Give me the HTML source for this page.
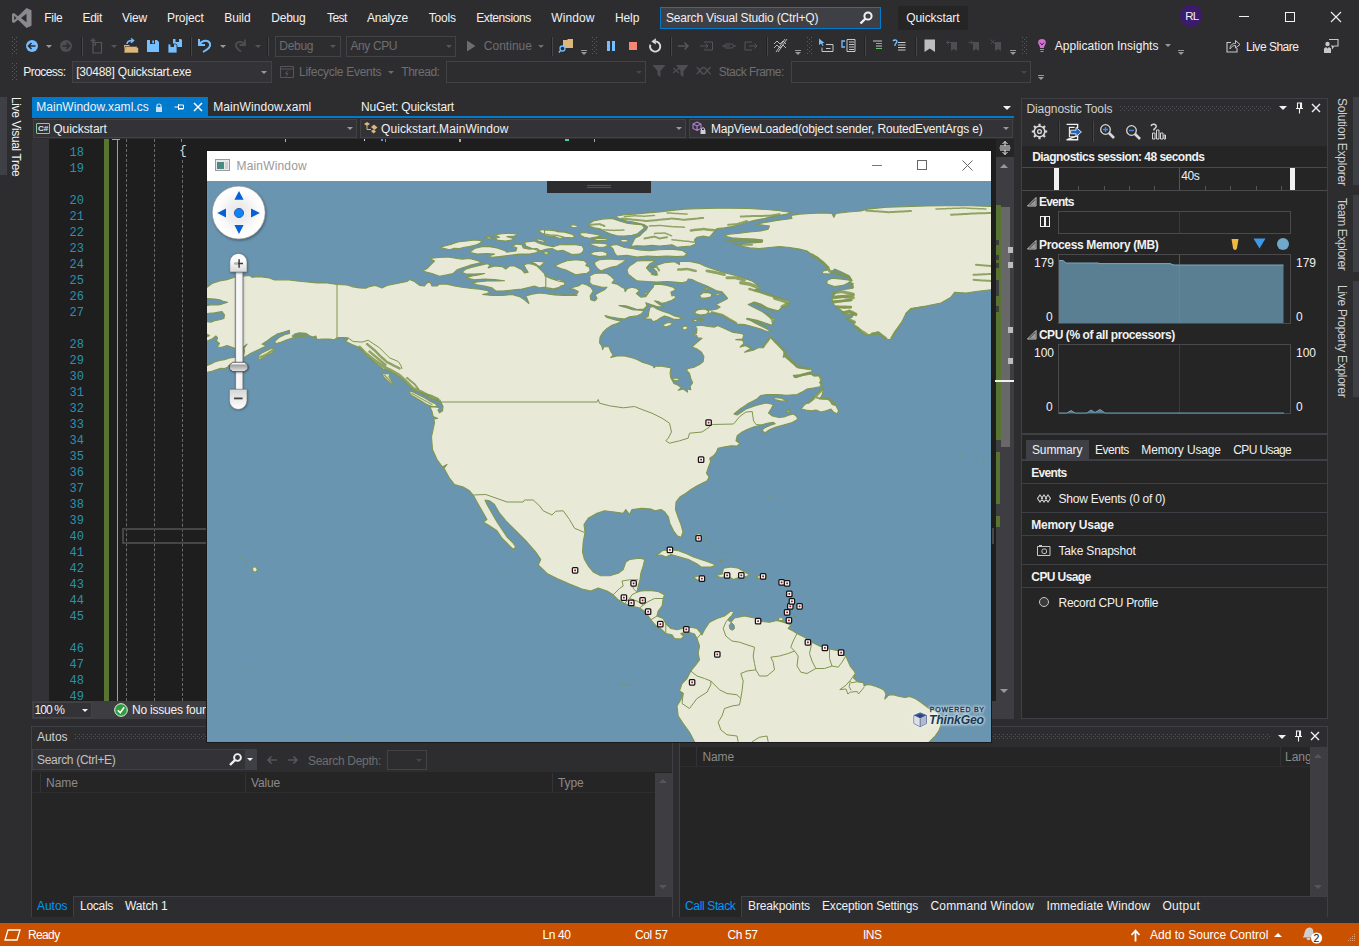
<!DOCTYPE html>
<html><head><meta charset="utf-8">
<style>
*{box-sizing:border-box;margin:0;padding:0}
html,body{width:1359px;height:946px;overflow:hidden;background:#2d2d30}
body{font-family:"Liberation Sans",sans-serif;font-size:12px;color:#f1f1f1;position:relative}
.a{position:absolute}
.t{position:absolute;white-space:nowrap;line-height:16px;height:16px}
.dim{color:#6d6d70}
.grip{position:absolute;width:5px;background-image:radial-gradient(circle at 0.5px 0.5px,#5a5a5f 0.55px,transparent 0.6px),radial-gradient(circle at 0.5px 0.5px,#5a5a5f 0.55px,transparent 0.6px);background-size:4px 4px,4px 4px;background-position:0 0,2px 2px}
.sep{position:absolute;width:1px;background:#222224;border-right:1px solid #464648;width:2px}
.combo{position:absolute;border:1px solid #434346;background:#333337}
.arr{position:absolute;width:0;height:0;border-left:3px solid transparent;border-right:3px solid transparent;border-top:3px solid #999}
.dots{position:absolute;height:5px;background-image:radial-gradient(circle at 0.5px 0.5px,#55555a 0.55px,transparent 0.6px),radial-gradient(circle at 0.5px 0.5px,#55555a 0.55px,transparent 0.6px);background-size:4px 4px,4px 4px;background-position:0 0,2px 2px}
</style></head><body>

<!-- ===== MENU BAR ===== -->
<div id="menubar">
<svg class="a" style="left:11px;top:7px" width="22" height="22" viewBox="0 0 22 22"><path d="M15.5 1 L20.5 3.2 V18.8 L15.5 21 L7 12.8 L3 16 L1 15 V7 L3 6 L7 9.2 Z M3.2 8.8 V13.2 L5.5 11 Z M10 11 L15.5 15.3 V6.7 Z" fill="#8a8a8e" fill-rule="evenodd"/></svg>
<div class="t" style="left:44.25px;top:10px;letter-spacing:-0.273px">File</div>
<div class="t" style="left:82.5px;top:10px;letter-spacing:-0.297px">Edit</div>
<div class="t" style="left:122px;top:10px;letter-spacing:-0.199px">View</div>
<div class="t" style="left:167px;top:10px;letter-spacing:-0.087px">Project</div>
<div class="t" style="left:224.25px;top:10px;letter-spacing:-0.087px">Build</div>
<div class="t" style="left:271.25px;top:10px;letter-spacing:-0.225px">Debug</div>
<div class="t" style="left:327px;top:10px;letter-spacing:-0.566px">Test</div>
<div class="t" style="left:367px;top:10px;letter-spacing:-0.243px">Analyze</div>
<div class="t" style="left:428.75px;top:10px;letter-spacing:-0.203px">Tools</div>
<div class="t" style="left:476.25px;top:10px;letter-spacing:-0.420px">Extensions</div>
<div class="t" style="left:551.25px;top:10px;letter-spacing:0.094px">Window</div>
<div class="t" style="left:615px;top:10px;letter-spacing:-0.109px">Help</div>
<div class="a" style="left:660px;top:7px;width:221px;height:22px;border:1px solid #007acc;background:#3f3f46"></div>
<div class="t" style="left:666px;top:10px;letter-spacing:-0.182px">Search Visual Studio (Ctrl+Q)</div>
<svg class="a" style="left:858px;top:10px" width="16" height="16" viewBox="0 0 16 16"><circle cx="10" cy="6" r="3.6" fill="none" stroke="#f1f1f1" stroke-width="2"/><path d="M7.5 8.5 L2.5 13.5" stroke="#f1f1f1" stroke-width="2.4"/></svg>
<div class="a" style="left:898px;top:6px;width:70px;height:24px;background:#252526"></div>
<div class="t" style="left:906.25px;top:10px;letter-spacing:-0.077px">Quickstart</div>
<div class="a" style="left:1180px;top:5px;width:22px;height:22px;border-radius:11px;background:#3c1a6e"></div>
<div class="t" style="left:1185.25px;top:8px;font-size:11.5px;letter-spacing:-0.727px">RL</div>
<div class="a" style="left:1239px;top:16px;width:10px;height:1px;background:#f1f1f1"></div>
<div class="a" style="left:1285px;top:12px;width:10px;height:10px;border:1px solid #f1f1f1"></div>
<svg class="a" style="left:1330px;top:11px" width="12" height="12" viewBox="0 0 12 12"><path d="M1 1 L11 11 M11 1 L1 11" stroke="#f1f1f1" stroke-width="1.1"/></svg>
</div>

<!-- ===== TOOLBAR ROW 1 ===== -->
<div id="tb1">
<div class="grip" style="left:12px;top:37px;height:18px"></div>
<svg class="a" style="left:24px;top:38px" width="16" height="16" viewBox="0 0 16 16"><circle cx="8" cy="8" r="6" fill="#75beff"/><path d="M11.5 8 H5 M7.5 5 L4.5 8 L7.5 11" stroke="#2d2d30" stroke-width="1.6" fill="none"/></svg>
<div class="arr" style="left:46px;top:45px"></div>
<svg class="a" style="left:58px;top:38px" width="16" height="16" viewBox="0 0 16 16"><circle cx="8" cy="8" r="6" fill="#4e4e52"/><path d="M4.5 8 H11 M8.5 5 L11.5 8 L8.5 11" stroke="#2d2d30" stroke-width="1.6" fill="none"/></svg>
<div class="sep" style="left:81px;top:37px;height:19px"></div>
<svg class="a" style="left:89px;top:37px" width="16" height="18" viewBox="0 0 16 18"><path d="M4 5.5 H12.5 V16 H4 Z M6.5 5.5 V8 H4" stroke="#55555a" fill="none" stroke-width="1.2"/><path d="M4 1 V6 M1.5 3.5 H6.5 M2.2 1.7 L5.8 5.3 M5.8 1.7 L2.2 5.3" stroke="#55555a" stroke-width="0.9"/></svg>
<div class="arr" style="left:111px;top:45px;border-top-color:#55555a"></div>
<svg class="a" style="left:123px;top:38px" width="17" height="16" viewBox="0 0 17 16"><path d="M1 7 H6 L7.5 8.5 H14 V15 H1 Z" fill="#dcb67a"/><path d="M2 8.5 H13 L15.5 10 V15 H1 Z" fill="#dcb67a" stroke="#2d2d30" stroke-width="0.6"/><path d="M4 6 C4 3 6 2.5 9.5 2.5 M8 0.5 L10.5 2.5 L8 4.8" stroke="#75beff" stroke-width="1.5" fill="none"/></svg>
<svg class="a" style="left:146px;top:39px" width="14" height="14" viewBox="0 0 14 14"><path d="M1 1 H11 L13 3 V13 H1 Z" fill="#75beff"/><rect x="4" y="1" width="5" height="4" fill="#2d2d30"/><rect x="6.3" y="1.5" width="1.7" height="2.8" fill="#75beff"/></svg>
<svg class="a" style="left:167px;top:38px" width="16" height="16" viewBox="0 0 16 16"><path d="M6 1 H14 L15 2 V9 H6 Z" fill="#75beff"/><rect x="8.5" y="1" width="3.5" height="3" fill="#2d2d30"/><path d="M1 6 H9 L10 7 V15 H1 Z" fill="#75beff" stroke="#2d2d30" stroke-width="0.8"/><rect x="3.5" y="6" width="3.5" height="3" fill="#2d2d30"/></svg>
<div class="sep" style="left:190px;top:37px;height:19px"></div>
<svg class="a" style="left:197px;top:37px" width="16" height="17" viewBox="0 0 16 17"><path d="M2 2 V8 H8 M2.5 7.5 C5 3 11 2.5 13 6.5 C14 10 11 12 6 15" stroke="#75beff" stroke-width="2" fill="none"/></svg>
<div class="arr" style="left:220px;top:45px"></div>
<svg class="a" style="left:233px;top:38px" width="14" height="15" viewBox="0 0 14 15"><path d="M12 1.5 V7 H6.5 M11.5 6.5 C9.5 3 4.5 3 3 6 C2 9 4 11 8 13.5" stroke="#4e4e52" stroke-width="1.8" fill="none"/></svg>
<div class="arr" style="left:255px;top:45px;border-top-color:#55555a"></div>
<div class="sep" style="left:267px;top:37px;height:19px"></div>
<div class="combo" style="left:275px;top:36px;width:66px;height:21px;background:#2d2d30"></div>
<div class="t dim" style="left:279.25px;top:38px;letter-spacing:-0.275px">Debug</div>
<div class="arr" style="left:330px;top:45px;border-top-color:#55555a"></div>
<div class="combo" style="left:346px;top:36px;width:110px;height:21px;background:#2d2d30"></div>
<div class="t dim" style="left:350.5px;top:38px;letter-spacing:-0.408px">Any CPU</div>
<div class="arr" style="left:446px;top:45px;border-top-color:#55555a"></div>
<svg class="a" style="left:466px;top:40px" width="10" height="12" viewBox="0 0 10 12"><path d="M1 0.5 L9.5 6 L1 11.5 Z" fill="#6d6d70"/></svg>
<div class="t dim" style="left:483.75px;top:38px;letter-spacing:0.025px">Continue</div>
<div class="arr" style="left:538px;top:45px;border-top-color:#6d6d70"></div>
<div class="sep" style="left:551px;top:37px;height:19px"></div>
<svg class="a" style="left:558px;top:38px" width="17" height="16" viewBox="0 0 17 16"><path d="M5 2 H9 L10 1 H15 V10 H5 Z" fill="#dcb67a"/><circle cx="4.5" cy="10.5" r="2.5" fill="#2d2d30" stroke="#75beff" stroke-width="1.3"/><path d="M2.8 12.3 L0.8 14.5" stroke="#75beff" stroke-width="1.5"/></svg>
<div class="a" style="left:581px;top:50px;width:6px;height:1px;background:#999"></div><div class="arr" style="left:581px;top:52px"></div>
<div class="grip" style="left:592px;top:37px;height:18px"></div>
<div class="a" style="left:607px;top:41px;width:3px;height:10px;background:#75beff"></div><div class="a" style="left:612px;top:41px;width:3px;height:10px;background:#75beff"></div>
<div class="a" style="left:629px;top:42px;width:8px;height:8px;background:#f48771"></div>
<svg class="a" style="left:647px;top:38px" width="16" height="16" viewBox="0 0 16 16"><path d="M8.3 3.4 A5.1 5.1 0 1 1 3.4 6.6" stroke="#d8d8d8" stroke-width="1.9" fill="none"/><path d="M8.8 0.3 V6.6 L4.3 3.4 Z" fill="#d8d8d8"/></svg>
<div class="sep" style="left:670px;top:37px;height:19px"></div>
<svg class="a" style="left:677px;top:40px" width="14" height="12" viewBox="0 0 14 12"><path d="M1 6 H11 M7.5 2.5 L11 6 L7.5 9.5" stroke="#55555a" stroke-width="1.5" fill="none"/></svg>
<svg class="a" style="left:700px;top:40px" width="14" height="12" viewBox="0 0 14 12"><path d="M0 6 H8 M5.5 3.5 L8 6 L5.5 8.5 M4 2 H12.5 V10 H4" stroke="#55555a" stroke-width="1" fill="none"/></svg>
<svg class="a" style="left:722px;top:40px" width="14" height="12" viewBox="0 0 14 12"><path d="M4 4 H10 C12 4 12 8 10 8 H4 C2 8 2 4 4 4 M0 6 H8 M11 6 H14" stroke="#55555a" stroke-width="1" fill="none"/></svg>
<svg class="a" style="left:744px;top:40px" width="14" height="12" viewBox="0 0 14 12"><path d="M5 6 H13 M10.5 3.5 L13 6 L10.5 8.5 M8 2 H1 V10 H8" stroke="#55555a" stroke-width="1" fill="none"/></svg>
<div class="sep" style="left:766px;top:37px;height:19px"></div>
<svg class="a" style="left:773px;top:38px" width="16" height="16" viewBox="0 0 16 16"><path d="M1 6 L4 3 L7 6 L10 3 L13 6 M1 10 L4 7 L7 10 L10 7 L13 10 M3 14 L12 1 M5 14 L14 1" stroke="#c8c8c8" stroke-width="0.9" fill="none"/></svg>
<div class="a" style="left:795px;top:50px;width:6px;height:1px;background:#999"></div><div class="arr" style="left:795px;top:52px"></div>
<div class="grip" style="left:807px;top:37px;height:18px"></div>
<svg class="a" style="left:818px;top:38px" width="17" height="15" viewBox="0 0 17 15"><path d="M1 0.5 L1 7 L3 5.5 L4.5 8 L5.5 7.5 L4.3 5 L6.5 5 Z" fill="#75beff"/><path d="M4 9.5 V13.5 H15 V6.5 H8" stroke="#c8c8c8" fill="none" stroke-width="1"/><path d="M8 10.5 H12.5" stroke="#c8c8c8"/></svg>
<svg class="a" style="left:841px;top:38px" width="16" height="15" viewBox="0 0 16 15"><path d="M4 3 H1 V9 H4" stroke="#75beff" stroke-width="1.3" fill="none"/><path d="M6 1.5 H14 V13.5 H6 Z" stroke="#c8c8c8" fill="none"/><path d="M8 4 H13 M8 6.5 H13 M8 9 H13 M8 11.5 H13" stroke="#c8c8c8"/></svg>
<div class="sep" style="left:864px;top:37px;height:19px"></div>
<svg class="a" style="left:872px;top:40px" width="12" height="11" viewBox="0 0 12 11"><path d="M1 1 H10 M4 3.5 H10 M4 6 H10" stroke="#c8c8c8"/><path d="M4 8.5 H10" stroke="#6abf69"/><path d="M4 3.5 H10" stroke="#6abf69"/></svg>
<svg class="a" style="left:892px;top:39px" width="15" height="13" viewBox="0 0 15 13"><path d="M1 2 C2 0.5 5 0.5 5 2.5 C5 4 2.5 4.5 3 7" stroke="#75beff" stroke-width="1.4" fill="none"/><path d="M6 3.5 H13.5 M6 6 H13.5 M6 8.5 H13.5 M6 11 H13.5" stroke="#c8c8c8"/></svg>
<div class="sep" style="left:915px;top:37px;height:19px"></div>
<svg class="a" style="left:924px;top:39px" width="12" height="14" viewBox="0 0 12 14"><path d="M0.5 0.5 H11 V13 L5.8 9.5 L0.5 13 Z" fill="#bdbdbd"/></svg>
<svg class="a" style="left:946px;top:39px" width="12" height="13" viewBox="0 0 12 13"><path d="M5 3 H11 V12 L8 10 L5 12 Z" fill="#4e4e52"/><path d="M0.5 3.5 H5 M2.5 1.5 L0.5 3.5 L2.5 5.5" stroke="#4e4e52" fill="none"/></svg>
<svg class="a" style="left:968px;top:39px" width="12" height="13" viewBox="0 0 12 13"><path d="M5 3 H11 V12 L8 10 L5 12 Z" fill="#4e4e52"/><path d="M0.5 3.5 H5 M3 1.5 L5 3.5 L3 5.5" stroke="#4e4e52" fill="none"/></svg>
<svg class="a" style="left:990px;top:39px" width="12" height="13" viewBox="0 0 12 13"><path d="M5 3 H11 V12 L8 10 L5 12 Z" fill="#4e4e52"/><path d="M0.5 0.5 L5 5 M5 0.5 L0.5 5" stroke="#4e4e52" fill="none"/></svg>
<div class="a" style="left:1010px;top:50px;width:6px;height:1px;background:#999"></div><div class="arr" style="left:1010px;top:52px"></div>
<div class="grip" style="left:1022px;top:37px;height:18px"></div>
<svg class="a" style="left:1036px;top:38px" width="12" height="16" viewBox="0 0 12 16"><path d="M6 1 C2.5 1 1.5 4 2.5 6 C3.5 8 4 8.5 4 10 H8 C8 8.5 8.5 8 9.5 6 C10.5 4 9.5 1 6 1 Z" fill="#d670d6"/><path d="M4 4.5 L6 7 L8 4.5" stroke="#2d2d30" fill="none"/><path d="M4 11.5 H8 M4.5 13.5 H7.5" stroke="#d670d6" stroke-width="1.2"/></svg>
<div class="t" style="left:1054.75px;top:38px;letter-spacing:0.017px">Application Insights</div>
<div class="arr" style="left:1165px;top:44px"></div>
<div class="a" style="left:1178px;top:50px;width:6px;height:1px;background:#999"></div><div class="arr" style="left:1178px;top:52px"></div>
<svg class="a" style="left:1226px;top:39px" width="15" height="14" viewBox="0 0 15 14"><path d="M5 3.5 H1 V13 H11 V9" stroke="#c8c8c8" fill="none" stroke-width="1.1"/><path d="M4 10 C4 6 6 4.5 9.5 4.5 V1.5 L14 5.5 L9.5 9 V6.5 C7 6.5 5.5 7.5 4 10 Z" stroke="#c8c8c8" fill="none" stroke-width="1"/></svg>
<div class="t" style="left:1246px;top:39px;letter-spacing:-0.487px">Live Share</div>
<svg class="a" style="left:1323px;top:38px" width="16" height="16" viewBox="0 0 16 16"><path d="M6 1.5 H15 V8 H11 L9.5 10 V8 H8" stroke="#c8c8c8" fill="none" stroke-width="1.1"/><circle cx="4.5" cy="6" r="2.2" fill="#c8c8c8"/><path d="M1 15 V10.5 L3 9 L4.5 10.5 L6 9 L8 10.5 V15 Z" fill="#c8c8c8"/></svg>
</div>

<!-- ===== TOOLBAR ROW 2 ===== -->
<div id="tb2">
<div class="grip" style="left:12px;top:63px;height:18px"></div>
<div class="t" style="left:23.25px;top:64px;letter-spacing:-0.555px">Process:</div>
<div class="combo" style="left:72px;top:61px;width:200px;height:22px"></div>
<div class="t" style="left:76.25px;top:64px;letter-spacing:-0.231px">[30488] Quickstart.exe</div>
<div class="arr" style="left:261px;top:71px"></div>
<svg class="a" style="left:280px;top:66px" width="14" height="12" viewBox="0 0 14 12"><path d="M0.5 0.5 H13.5 V11.5 H0.5 Z M0.5 3 H13.5" stroke="#55555a" fill="none"/><path d="M8 4.5 L5.5 7.5 H8 L6 10.5" stroke="#55555a" fill="none"/></svg>
<div class="t dim" style="left:299px;top:64px;letter-spacing:-0.279px">Lifecycle Events</div>
<div class="arr" style="left:388px;top:71px;border-top-color:#6d6d70"></div>
<div class="t dim" style="left:401.25px;top:64px;letter-spacing:-0.444px">Thread:</div>
<div class="combo" style="left:446px;top:61px;width:200px;height:22px;background:#2d2d30"></div>
<div class="arr" style="left:636px;top:71px;border-top-color:#47474a"></div>
<svg class="a" style="left:652px;top:64px" width="14" height="14" viewBox="0 0 14 14"><path d="M0.5 1 H13.5 L8.5 7 V13 L5.5 11 V7 Z" fill="#4e4e52"/></svg>
<svg class="a" style="left:673px;top:64px" width="16" height="14" viewBox="0 0 16 14"><path d="M3 1 H15.5 L10.5 7 V13 L7.5 11 V7 Z" fill="#4e4e52"/><path d="M0 4 L6 9 M6 4 L0 9" stroke="#4e4e52" stroke-width="1.3"/></svg>
<svg class="a" style="left:696px;top:66px" width="16" height="10" viewBox="0 0 16 10"><path d="M0.5 8 C3 8 4 1.5 7.5 1.5 C11 1.5 12 8 15 8 M0.5 1.5 C3 1.5 5 8 7.5 8 C10 8 12 1.5 15 1.5" stroke="#4e4e52" stroke-width="1.6" fill="none"/></svg>
<div class="t dim" style="left:718.75px;top:64px;letter-spacing:-0.530px">Stack Frame:</div>
<div class="combo" style="left:791px;top:61px;width:240px;height:22px;background:#2d2d30"></div>
<div class="arr" style="left:1021px;top:71px;border-top-color:#47474a"></div>
<div class="a" style="left:1038px;top:75px;width:6px;height:1px;background:#999"></div><div class="arr" style="left:1038px;top:77px"></div>
</div>

<!-- ===== LEFT VERTICAL TAB ===== -->
<div class="a" style="left:0;top:97px;width:7px;height:78px;background:#3f3f46"></div>
<div class="t" style="left:24px;top:97px;transform-origin:0 0;transform:rotate(90deg);letter-spacing:-0.361px">Live Visual Tree</div>
<!-- ===== DOC TABS ===== -->
<div id="tabs">
<div class="a" style="left:32px;top:97px;width:176px;height:20px;background:#007acc"></div>
<div class="t" style="left:36.25px;top:99px;letter-spacing:0.026px">MainWindow.xaml.cs</div>
<svg class="a" style="left:155px;top:103px" width="8" height="10" viewBox="0 0 8 10"><path d="M2 4 V2.5 C2 0.5 6 0.5 6 2.5 V4" stroke="#c8dff0" fill="none" stroke-width="1.2"/><rect x="1" y="4" width="6" height="5" fill="#c8dff0"/></svg>
<svg class="a" style="left:174px;top:102px" width="11" height="10" viewBox="0 0 11 10"><path d="M0.5 5 H4.5 M4.5 2 V8 M4.5 3 H9.5 V6.5 H4.5 M4.5 7 H9.5" stroke="#fff" fill="none" stroke-width="1"/></svg>
<svg class="a" style="left:193px;top:102px" width="10" height="10" viewBox="0 0 10 10"><path d="M1 1 L9 9 M9 1 L1 9" stroke="#fff" stroke-width="1.5"/></svg>
<div class="t" style="left:213.25px;top:99px;letter-spacing:0.086px">MainWindow.xaml</div>
<div class="t" style="left:361px;top:99px;letter-spacing:-0.140px">NuGet: Quickstart</div>
<div class="a" style="left:32px;top:116px;width:982px;height:2px;background:#007acc"></div>
<div class="arr" style="left:1003px;top:106px;border-left-width:4px;border-right-width:4px;border-top-width:4px;border-top-color:#f1f1f1"></div>
</div>
<!-- ===== NAV BAR ===== -->
<div id="nav">
<div class="a" style="left:32px;top:118px;width:982px;height:21px;background:#2d2d30"></div>
<div class="combo" style="left:33px;top:119px;width:324px;height:19px"></div>
<div class="combo" style="left:360px;top:119px;width:326px;height:19px"></div>
<div class="combo" style="left:689px;top:119px;width:324px;height:19px"></div>
<div class="a" style="left:36px;top:123px;width:14px;height:11px;border:1px solid #8fc98f;border-radius:1px"></div>
<div class="t" style="left:38px;top:121px;font-size:8px;font-weight:bold;color:#e0e0e0">C#</div>
<div class="t" style="left:53.25px;top:121px;letter-spacing:-0.052px">Quickstart</div>
<div class="arr" style="left:347px;top:127px"></div>
<svg class="a" style="left:363px;top:121px" width="16" height="15" viewBox="0 0 16 15"><path d="M1 3 L4 1 L7 3 L4 5 Z" fill="#dcb67a"/><path d="M4 5 V8.5 H8" stroke="#dcb67a" fill="none"/><path d="M8 6 L11 3.5 L14.5 6.5 L11.5 9 Z" fill="#dcb67a"/><path d="M8 10 L10.5 8.5 L13 10.5 L10.5 12.5 Z" fill="#dcb67a"/></svg>
<div class="t" style="left:381px;top:121px;letter-spacing:0.069px">Quickstart.MainWindow</div>
<div class="arr" style="left:676px;top:127px"></div>
<svg class="a" style="left:692px;top:121px" width="16" height="15" viewBox="0 0 16 15"><path d="M5 1 L9 3 V7.5 L5 9.5 L1 7.5 V3 Z M1 3 L5 5 L9 3 M5 5 V9.5" stroke="#b180d7" fill="none" stroke-width="1.1"/><rect x="8.5" y="9" width="5" height="4" fill="#d0d0d0"/><path d="M9.5 9 V7.8 C9.5 6.5 12.5 6.5 12.5 7.8 V9" stroke="#d0d0d0" fill="none"/></svg>
<div class="t" style="left:711px;top:121px;letter-spacing:-0.166px">MapViewLoaded(object sender, RoutedEventArgs e)</div>
<div class="arr" style="left:1003px;top:127px"></div>
</div>

<!-- ===== EDITOR ===== -->
<div id="editor">
<div class="a" style="left:32px;top:139px;width:982px;height:562px;background:#1e1e1e"></div>
<div class="a" style="left:32px;top:139px;width:17px;height:562px;background:#333337"></div>
<div class="a" style="left:104px;top:139px;width:5px;height:562px;background:#577430"></div>
<div class="a" style="left:117px;top:139px;width:1px;height:562px;background:#a0a0a0"></div>
<div class="a" style="left:112px;top:139px;width:8px;height:1px;background:#a0a0a0"></div>
<div class="a" style="left:126px;top:139px;width:0;height:562px;border-left:1px dashed #6a6a6a"></div>
<div class="a" style="left:154px;top:139px;width:0;height:562px;border-left:1px dashed #6a6a6a"></div>
<div class="a" style="left:182px;top:160px;width:0;height:541px;border-left:1px dashed #6a6a6a"></div>
<div class="t" style="left:179px;top:143px;font-family:'Liberation Mono',monospace;font-size:13px;color:#dcdcdc">{</div>
<div class="a" style="left:364px;top:139px;width:1px;height:2px;background:#dcdcdc"></div>
<div class="a" style="left:381px;top:139px;width:2px;height:2px;background:#569cd6"></div><div class="a" style="left:385px;top:139px;width:1px;height:3px;background:#569cd6"></div>
<div class="a" style="left:459px;top:139px;width:2px;height:3px;background:#a8a8a8"></div>
<div class="a" style="left:565px;top:139px;width:4px;height:2px;background:#4ec9b0"></div>
<div class="a" style="left:594px;top:139px;width:1px;height:3px;background:#a8a8a8"></div>
<div class="a" style="left:181px;top:139px;width:1px;height:3px;background:#4a90c0"></div>
<div class="a" style="left:285px;top:139px;width:1px;height:3px;background:#b8c070"></div>
<div class="a" style="left:122px;top:528px;width:872px;height:16px;border:2px solid #464646"></div>
<div id="ln" class="a" style="left:60px;top:145px;width:24px;text-align:right;font-family:'Liberation Mono',monospace;font-size:12px;line-height:16px;color:#2b91af">18<br>19<br><br>20<br>21<br>22<br>23<br>24<br>25<br>26<br>27<br><br>28<br>29<br>30<br>31<br>32<br>33<br>34<br>35<br>36<br>37<br>38<br>39<br>40<br>41<br>42<br>43<br>44<br>45<br><br>46<br>47<br>48<br>49</div>
<!-- editor bottom bar -->
<div class="a" style="left:32px;top:701px;width:982px;height:18px;background:#3e3e42"></div>
<div class="a" style="left:33px;top:702px;width:59px;height:16px;background:#333337;border:1px solid #434346"></div>
<div class="t" style="left:34.5px;top:702px;letter-spacing:-0.906px">100 %</div>
<div class="arr" style="left:82px;top:709px;border-top-color:#f1f1f1"></div>
<svg class="a" style="left:114px;top:703px" width="14" height="14" viewBox="0 0 14 14"><circle cx="7" cy="7" r="6.3" fill="#2e9b3e" stroke="#e8f5e8" stroke-width="1"/><path d="M3.8 7.2 L6.2 9.8 L10.2 4.2" stroke="#fff" stroke-width="1.6" fill="none"/></svg>
<div class="t" style="left:132px;top:702px;letter-spacing:-0.204px">No issues found</div>
<!-- scrollbar -->
<div class="a" style="left:996px;top:139px;width:18px;height:562px;background:#3e3e42"></div>
<div class="a" style="left:996px;top:139px;width:18px;height:18px;background:#252526"></div>
<svg class="a" style="left:999px;top:141px" width="12" height="14" viewBox="0 0 12 14"><path d="M0.5 7 H11.5 M6 0.5 V5 M6 9 V13.5 M3.5 3 L6 0.5 L8.5 3 M3.5 11 L6 13.5 L8.5 11 M1 5 H11 M1 9 H11" stroke="#f1f1f1" fill="none" stroke-width="1"/></svg>
<div class="arr" style="left:1000px;top:164px;border-left-width:4px;border-right-width:4px;border-top:0;border-bottom:4px solid #999"></div>
<div class="a" style="left:1001px;top:207px;width:9px;height:240px;background:#686868"></div>
<div class="a" style="left:996px;top:205px;width:5px;height:235px;background:#577430"></div>
<div class="a" style="left:996px;top:452px;width:4px;height:52px;background:#577430"></div>
<div class="a" style="left:996px;top:516px;width:4px;height:11px;background:#577430"></div>
<div class="a" style="left:996px;top:240px;width:3px;height:5px;background:#3e3e42"></div>
<div class="a" style="left:996px;top:255px;width:3px;height:5px;background:#3e3e42"></div>
<div class="a" style="left:996px;top:263px;width:3px;height:5px;background:#3e3e42"></div>
<div class="a" style="left:996px;top:280px;width:3px;height:16px;background:#3e3e42"></div>
<div class="a" style="left:996px;top:306px;width:3px;height:6px;background:#3e3e42"></div>
<div class="a" style="left:1008px;top:247px;width:5px;height:6px;background:#bcbcbc"></div>
<div class="a" style="left:1008px;top:262px;width:5px;height:6px;background:#bcbcbc"></div>
<div class="a" style="left:1008px;top:327px;width:5px;height:6px;background:#bcbcbc"></div>
<div class="a" style="left:1008px;top:358px;width:5px;height:6px;background:#bcbcbc"></div>
<div class="a" style="left:995px;top:380px;width:19px;height:2px;background:#f0f0f0"></div>
<div class="arr" style="left:1000px;top:689px;border-left-width:4px;border-right-width:4px;border-top:4px solid #999"></div>
</div>

<!-- ===== MAP WINDOW ===== -->
<div id="mapwin" style="position:absolute;left:0;top:0;z-index:5">
<div class="a" style="left:206px;top:150px;width:786px;height:593px;background:#1a1a1c"></div>
<div class="a" style="left:207px;top:151px;width:784px;height:30px;background:#fff"></div>
<div class="a" style="left:215px;top:159px;width:15px;height:12px;border:1px solid #9a9a9a;background:#e8e8e8"></div>
<div class="a" style="left:217px;top:162px;width:7px;height:7px;background:#4a8a80"></div>
<div class="a" style="left:225px;top:162px;width:3px;height:7px;background:#d0d0d0"></div>
<div class="t" style="left:236.5px;top:158px;color:#999;letter-spacing:0.170px">MainWindow</div>
<div class="a" style="left:872px;top:165px;width:10px;height:1px;background:#777"></div>
<div class="a" style="left:917px;top:160px;width:10px;height:10px;border:1px solid #666"></div>
<svg class="a" style="left:962px;top:160px" width="11" height="11" viewBox="0 0 11 11"><path d="M0.5 0.5 L10.5 10.5 M10.5 0.5 L0.5 10.5" stroke="#666" stroke-width="1"/></svg>
<svg class="a" style="left:207px;top:181px" width="784" height="561" viewBox="207 181 784 561" id="mapsvg">
<rect x="207" y="181" width="784" height="561" fill="#6995b0"/>
<!--LAND-->
<path d="M202 289.8 L207 287.2 L212 283.5 L219.5 281 L227 279.8 L234.5 277.2 L244.5 276 L249.5 275.4 L252 277.2 L259.5 276.6 L269.5 277.9 L274.5 280 L287 279.8 L297 281 L307 282 L317 282.9 L327 282.9 L337 284.5 L347 285 L352 286.6 L359.5 287.9 L365.8 288.2 L369.5 286.6 L374.5 285.4 L376.9 286 L382 288 L387 285.5 L397 283.5 L407 281.5 L409.5 279.5 L414.5 281.6 L419.5 285.4 L424.5 286 L427 282.9 L430.1 282.2 L432 286 L437 286 L439.5 284.1 L447 284.1 L454.5 286 L462 287.2 L472 288.5 L479.5 289.1 L487 290.4 L490.1 292 L487 293.5 L482.6 294.5 L492 295.4 L502 295.4 L512 294.5 L519.5 296.6 L524.5 299.8 L528.9 303.5 L527 298.5 L525.8 296 L532 294.1 L539.5 292.9 L544.5 293.5 L554.5 295 L564.5 295.4 L576.9 295.4 L554.5 294.8 L562 295.4 L572 294.8 L577 294.1 L578.2 291.6 L573.2 289.1 L569.5 288.5 L573.2 287.2 L578.2 286 L582 283.5 L587 285 L590.8 287.2 L593.2 291 L590.1 296 L590.8 299.8 L594.5 301 L597 298.5 L595.1 294.8 L599.5 292.2 L604.5 289.8 L607 287.2 L602 287.2 L597 286 L592 284.8 L589.5 282.2 L590.1 278.5 L589.5 276 L594.5 273.5 L600.8 272.9 L607 273.5 L610.8 276 L614.5 279.8 L612 282.9 L617 284.1 L622 287.2 L624.5 288.5 L625.1 291.6 L627.6 288.5 L632 287.2 L637 288.5 L639.5 291 L636.4 293.5 L640.8 297.2 L645.8 296.6 L648.2 293.5 L650.8 289.8 L653.2 287.2 L653.9 284.5 L659.5 284.1 L667 285.4 L673.2 287.2 L675.8 289.8 L670.8 292.2 L672 296 L674.5 295.2 L675.8 297.8 L672 300.2 L665.8 302.5 L662 303.4 L658.2 301.5 L654.5 300.9 L659.5 304.6 L664.5 307.1 L657 306.5 L650.8 304.6 L645.8 302.8 L647 305.9 L643.9 309 L637 309.6 L632 307.8 L625.8 305.9 L618.9 305.5 L624.5 307.1 L632 309.6 L639.5 310.2 L643.9 310.5 L642 313.4 L637 315.9 L629.5 316.8 L624.5 319 L617 318 L609.5 316.8 L605.1 315.5 L607 317.5 L614.5 319.6 L622 321.5 L617 323.4 L612 325.2 L607 328.4 L603.2 332.1 L600.1 337.1 L599.5 342.8 L602 346.5 L602.6 349.6 L603.9 346.8 L608.9 346.8 L610.8 351.5 L613.2 355.2 L610.8 357.5 L617 355.9 L624.5 355.9 L632 357.8 L637 359.6 L642 362.1 L648.2 364 L653.2 365.9 L653.9 367.8 L655.8 366.2 L662 366.2 L667 367.1 L671 367.8 L670.1 372.8 L670.8 377.8 L672.6 380.9 L673.9 383.4 L678.2 385.2 L681.4 387.8 L678.2 390.2 L683.2 389 L687.6 392.1 L687 389 L690.8 389.6 L690.1 386.5 L692.6 382.8 L690.8 378.4 L689.5 373.4 L686.4 370.2 L688.2 368.4 L694.5 367.1 L699.5 364.6 L703.2 361.5 L703.9 356.5 L701.4 352.1 L697 349 L692 347.1 L695.1 344 L698.9 340.9 L702 338.4 L697.6 337.8 L696.4 335.2 L691.4 335.2 L696.4 333.4 L697 329 L695.1 325.9 L700.8 325.2 L708.2 326.5 L714.5 327.1 L716.9 325.9 L717 325.2 L724.5 328.4 L732 332.1 L740.8 333.4 L743.9 334.6 L742.6 339 L735.8 339.6 L742.6 340.2 L743.9 343.4 L740.1 347.1 L745.1 345.2 L750.8 348.4 L744.5 352.1 L753.2 350.2 L758.2 347.8 L763.2 347.8 L765.1 343.4 L768.2 340.2 L770.8 336.5 L774.5 341.5 L779.5 346.5 L784.5 351.5 L783.2 357.1 L788.2 356.5 L790.8 360.9 L794.5 364 L798.2 367.8 L804.5 368.4 L810.8 369 L812.6 371.5 L807 372.8 L799.5 375.2 L793.2 375.2 L795.8 377.8 L803.2 375.2 L810.8 374 L813.9 375.9 L819.5 375.2 L822 379 L819.5 382.8 L822 384 L821.4 386.5 L814.5 387.8 L807 389 L802 392.1 L797 394.6 L787 395.2 L777 394.6 L767 394.6 L760.8 395.5 L757 399 L753.2 400.9 L748.2 403.4 L743.2 406.9 L741 408.2 L734 414 L737.2 415 L746 409 L756 405.5 L766 403 L773.5 404.5 L771 409 L768.5 413 L772.5 416 L779 417.5 L784 417 L788.5 415.2 L793.5 414 L796.8 416.5 L797.5 419.5 L792.2 422.5 L783.5 425 L776 427 L769.8 429.5 L764.8 433 L762 430.2 L764.8 427.8 L770.5 425.2 L775.2 423.8 L773 422.2 L767.2 423.2 L761 425 L753.5 427 L747.2 429.5 L742.2 432 L737.2 435.8 L736 440.8 L740 443.5 L737.2 446 L731 445.8 L723.5 447 L718 448.2 L716.5 452 L713.5 455.8 L709.8 458.2 L710.5 462 L708.5 467 L706.5 473.2 L709 477 L707.2 480.8 L702.2 483.2 L697.2 485.8 L691 489.5 L686 493.2 L679.8 497 L676 502 L675.5 509.5 L678 517 L681 524.5 L683 532 L681 537.5 L677.2 535.8 L673.5 530.8 L669.8 523.2 L668.5 517 L664.8 512 L661 509.5 L654.8 510.8 L651 509 L642 508.2 L632 509.5 L629.5 514.5 L625.8 509.5 L623.2 513.2 L614.5 512 L604.5 510.8 L597 513.2 L588.2 518.2 L584 524.5 L585 532.5 L583.2 542 L582.5 552 L584.5 559.5 L588.2 565.8 L593.2 572 L600.8 575.8 L609.5 575.8 L618.2 573.2 L623.2 569.5 L625.8 562 L629.5 559.5 L639.5 558.2 L645 559.5 L644.5 560.5 L643.2 566 L640.8 573.5 L640 579.8 L638.2 586 L637 592.2 L640.8 591 L649.5 590.5 L658.2 591.5 L664.5 594.8 L663.2 598.5 L662 606 L658.2 611 L657 616 L663.2 618.5 L665.8 623.5 L670.8 628.5 L677 629.8 L684.5 628 L690.8 627.2 L697 628.5 L700 632.2 L702 634.8 L704.5 629.8 L709.5 622.2 L717 618.5 L724.5 616 L730.8 611 L733.8 612 L731.5 616 L728.2 619.8 L730.8 622.2 L734.5 618 L744.5 616 L754.5 618 L762 621.5 L769.5 622.2 L777 620.5 L783.2 622.2 L790.8 624.8 L788.2 628.5 L793.2 631 L797 633.5 L804.5 637.2 L812 642.2 L819.5 646 L829.5 649 L839.5 651 L834.8 649 L841 652.1 L846 656.5 L847.9 660.9 L850.4 666.5 L854.1 670.9 L855.4 673.4 L853.5 677.8 L856.6 680.9 L863.5 682.5 L864.1 685.9 L867.2 684.6 L871 685 L876 686.5 L881 688.4 L884.1 690.2 L886 694 L884.8 699 L888.5 695.2 L892.9 694.6 L898.5 696.2 L904.8 697.5 L909.8 696.5 L914.8 698.4 L919.8 701.5 L924.8 705.2 L929.8 709 L936 710.9 L939.1 714 L940.4 719 L941 725.2 L939.1 730.2 L935.4 735.9 L931 740.2 L927.2 744 L923.5 761.5 L697 761 L694.5 741.8 L689.5 732.2 L683.2 723.5 L678.2 716 L677 706 L680.8 699.8 L683.2 693.5 L679.5 691 L682 683.5 L687 678.5 L690.8 671 L695.8 664.8 L699.5 659.8 L698.2 653.5 L699.5 646 L697 638.5 L694.5 634 L687 631.8 L680.8 633.5 L684 636.5 L680.8 639 L674.5 638.5 L672 634.8 L665.8 633.5 L662 629.8 L655.8 625.5 L650.8 619.8 L645.8 612.2 L639.5 608 L632 606 L624.5 603.5 L618.2 599.8 L613.2 594.8 L607 591 L598.2 588 L590.8 591 L582 589 L569.5 584 L557 578.5 L547 573.5 L538.2 565 L540.8 559.5 L535.8 552 L527 542 L517 532 L507 522 L499.5 513.2 L494.5 504.5 L489.5 500.8 L485 500 L487 504.5 L492 513.2 L497 522 L502 529.5 L507 537 L513.2 543.2 L515.8 547 L513.2 549.5 L507 543.2 L502 538.2 L497 530.8 L489.5 525.8 L483.2 522 L487 519.5 L482 510.8 L477 502 L473.2 495 L469.5 490.8 L463.2 487 L454.5 484.5 L449.5 478.2 L444 468.2 L447 464.5 L442.5 467 L437 459.5 L432.5 449.5 L431.5 437 L433.2 429 L434.5 422.8 L433.9 419 L437.6 418.4 L433.2 416.5 L432 411.5 L430.1 407.1 L432 406.8 L437 407.1 L439.8 407.8 L438 410.2 L439.5 412.8 L442.6 410.9 L443 406.5 L440.8 402.1 L437 400.2 L432 399 L427 395.9 L422 392.8 L414.5 390.5 L410.8 387.8 L407 384 L403.2 380.2 L399.5 377.1 L395.8 374.6 L392 372.8 L388.2 370.2 L383.2 369 L378.2 365.2 L374.5 362.1 L370.8 359 L367 355.9 L363.9 352.8 L362 349.6 L358.2 347.1 L352 344.6 L345.8 341.5 L348.2 338.4 L344.5 337.8 L337 337.8 L334.5 339.8 L329.5 339.1 L322 339.1 L317 339.5 L315.8 336 L313.2 337 L309.5 335.8 L305.8 333.2 L299.5 332.9 L294.5 334.1 L293.2 337.9 L287 339.8 L280.8 342.2 L275.1 343.8 L275.1 341 L279.5 337.2 L284.5 334.8 L289.5 333.5 L289.5 330.4 L283.2 332.2 L277 334.1 L272 337.2 L267 341 L262 344.1 L266.4 346 L262 347.9 L255.8 351 L249.5 354.1 L244.5 357.2 L235.8 362.2 L229.5 365 L227.6 367.2 L224.5 368.5 L220.8 368.2 L217 369.5 L212 371.2 L207 372.2 L202 372.9 L202 366 L207 365.4 L210.8 364.1 L214.5 362 L219.5 360.4 L224.5 359.8 L229.5 357.9 L235.8 357.2 L243.2 357.2 L244.5 351 L243.9 348.5 L247 344.1 L243.2 347.2 L235.1 348.5 L232 347.2 L227 345.4 L222 347.2 L217 347.2 L219.5 343.5 L216.4 341 L217.6 337.9 L215.8 336 L212 339.1 L207 341 L202 341 L202 336 L207 336.6 L209.5 335.8 L207 334.1 L202 334.1 L202 322.2 L207 321.6 L210.8 322.2 L214.5 320.8 L219.5 319.8 L223.9 318.5 L224.5 314.8 L222 311.6 L214.5 312.9 L207 313.5 L202 313.5 L202 305.4 L207 305.4 L212 304.8 L218.2 305 L222 304.1 L227.6 302.2 L223.2 301.2 L219.5 299.8 L214.5 299.1 L207 298.5 L202 298.5 Z M258.9 355.4 L262 352.9 L267 350.4 L272 347.9 L274.5 349.8 L272 352.9 L267 355.4 L262 358.5 L258.9 359.8 Z M382 373.4 L387 374 L390.1 373.4 L388.9 376.5 L391.4 380.2 L393.9 384.6 L390.8 383.4 L387 380.2 L383.9 377.1 Z M408.9 392.1 L412 391.5 L417 394 L424.5 397.8 L429.5 400.9 L435.8 404 L437 406.5 L432 406.5 L427 404.6 L422 401.5 L415.8 397.8 L411.4 395.2 Z M422.6 271 L427 268.5 L431.4 264.1 L434.5 261 L429.5 258.5 L438.2 257.5 L448.2 257 L457 258.5 L462 259.1 L469.5 258.5 L477 260.4 L482 262.2 L477 263.5 L469.5 265.4 L462 267.9 L457 269.8 L453.2 273.5 L447 274.8 L439.5 276.2 L432 273.5 L427 272.2 Z M462 272.2 L465.8 269.1 L472 267.2 L479.5 265.4 L487 263.8 L490.1 264.8 L488.2 267.9 L494.5 266 L502 266.6 L505.8 269.1 L509.5 266 L514.5 266 L517 267.2 L522 269.8 L524.5 272.9 L528.2 272.2 L525.8 268.5 L523.9 264.8 L528.2 263.5 L532 264.1 L537 266 L540.8 269.8 L544.5 273.5 L545.1 276 L550.8 278.5 L558.2 281 L564.5 282.2 L564.8 284.8 L560.8 286 L557 289.1 L552 288.5 L544.5 287.2 L539.5 287.9 L534.5 286 L529.5 287.2 L522 289.1 L514.5 289.8 L504.5 290.8 L495.8 291 L492 287.9 L484.5 286 L477 284.8 L472 282.9 L477 282 L487 281 L497 281 L504.5 280.8 L494.5 279.5 L484.5 279.1 L474.5 279.8 L465.8 277.9 L472 276 L479.5 274.8 L484.5 273.5 L474.5 274.1 L465.8 274.1 Z M530.8 262.2 L537 261.2 L544.5 262 L542 264.8 L539.5 266.6 L535.8 264.1 Z M439.5 247.9 L444.5 246 L452 244.1 L459.5 241.6 L467 241 L474.5 240 L482 240.8 L479.5 243.5 L474.5 245.4 L469.5 246.6 L464.5 247.2 L459.5 248.5 L454.5 248.2 L449.5 249.8 L444.5 248.5 Z M469.5 252.2 L474.5 248.5 L482 246.6 L489.5 246.6 L497 247.9 L504.5 250.4 L507 252.2 L515.8 251 L517 247.9 L512 246 L517 244.1 L522 244.8 L523.2 247.9 L529.5 249.1 L537 248.5 L539.5 250.4 L535.8 252.9 L529.5 254.1 L519.5 254.1 L509.5 255.4 L499.5 256.6 L492 257.2 L488.2 256 L494.5 254.1 L487 253.5 L477 254.1 Z M494.5 234.8 L502 233.8 L510.8 233.2 L517.6 234.1 L514.5 236 L507 236.6 L512 237.9 L513.2 239.8 L505.8 241 L498.2 240.4 L494.5 238.5 L499.5 237.2 Z M484.5 237.2 L488.2 236.6 L492.6 237.9 L489.5 239.1 Z M538.2 230.4 L544.5 229.5 L552 230 L557 231.6 L564.5 232.2 L572 234.1 L575.1 236.6 L572 237.9 L564.5 237.2 L557 235.4 L549.5 234.8 L542 233.5 Z M535.8 238.8 L539.5 239.1 L545.8 241 L543.2 242.2 L538.2 241 Z M542.6 252.9 L545.8 251.6 L549.5 252.9 L546.4 254.5 Z M544.5 230 L552 230.4 L559.5 231.4 L567 232.2 L573.2 234.8 L575.5 237.2 L570.8 238.2 L564.5 237.2 L559.5 238.5 L554.5 236.6 L549.5 236 L544.5 235.4 Z M569.2 225.4 L573.9 224.8 L577.6 226 L576.8 227.5 L572 227.2 Z M579.5 233.2 L584.5 232.5 L592 233.8 L598.2 234.8 L600.8 236.2 L594.5 237.2 L589.5 238.2 L584.5 237.2 L580.8 235.4 Z M592 239.1 L599.5 238.2 L608.2 238.8 L605.8 240.4 L597 240.5 Z M588.2 243.5 L597 242.9 L605.8 243.8 L608.2 245.4 L604.5 247 L599.5 247.5 L594.5 246 Z M524.5 242.2 L534.5 241 L539.5 243.5 L547 245.4 L553.2 246.6 L559.5 244.8 L567 244.5 L575.8 244.8 L582 245.8 L583.9 249.1 L582.6 252.2 L579.5 254.1 L572 254.5 L567 252.2 L563.2 250.4 L557 251 L552 248.5 L547 249.1 L539.5 251 L532 248.5 L525.8 246 Z M590.1 253.5 L594.5 251.6 L602 251 L607 252.9 L606.8 255.8 L599.5 256.6 L593.2 255.4 Z M588.9 224.1 L593.2 221 L602 219.1 L612 218.5 L619.5 221 L627 223.2 L634.5 224.1 L642 224.8 L644.5 227.9 L640.8 231 L637 234.1 L632 235.4 L624.5 236 L617 235.8 L610.8 234.1 L604.5 231.6 L600.8 229.1 L594.5 227.9 L590.1 226.6 Z M620.1 239.8 L624.5 239.1 L628.9 240.4 L627 242 L622 242 Z M609.5 245.4 L617 244.5 L624.5 247.5 L632 248.5 L639.5 250 L649.5 250.8 L659.5 249.8 L672 249.1 L682 250.4 L687 253.5 L684.5 256 L677 256.6 L667 256 L657 256.6 L647 256 L637 257 L627 255.4 L617 256 L614.5 252.9 L613.2 249.1 Z M554.5 266 L560.8 262.9 L567 260.8 L575.8 259.8 L584.5 260.8 L587 263.5 L585.8 265.4 L589.5 267.2 L590.1 271 L587 273.2 L580.8 274.1 L575.8 274.8 L572 272.9 L567 270.4 L560.8 268.5 Z M594.5 262.2 L599.5 259.8 L609.5 258.9 L619.5 259.8 L627 259.5 L622 262.9 L617 266 L610.8 267.2 L605.8 269.1 L600.8 271 L597.6 268.5 L595.1 265.4 Z M545.8 276 L552 278.5 L559.5 279.8 L564.5 281.6 L565.1 284.8 L559.5 287.2 L554.5 288.5 L547 289.1 L545.8 288.5 Z M616.4 216 L624.5 214.8 L634.5 214.1 L647 212.9 L659.5 212 L672 210.4 L684.5 209.1 L697 208.8 L716.9 208.2 L729.5 208.2 L748.2 208.5 L767 209.5 L779.5 210.8 L791.4 212.5 L787 214.1 L779.5 215.4 L772 216.6 L764.5 218.5 L754.5 220.4 L747 222.2 L739.5 224.8 L732 226.6 L724.5 227.9 L717 228.5 L709.5 237.2 L703.2 236 L697 237.2 L694.5 239.8 L695.8 244.1 L690.8 246 L684.5 246.6 L677 247.2 L672 244.8 L667 245.4 L659.5 246 L652 245.4 L644.5 246 L637 245.8 L630.8 246.2 L632 244.1 L633.5 241 L635.1 237.9 L639.5 236 L642.6 232.9 L646.4 229.5 L647.6 227 L643.9 224.5 L634.5 222.2 L627 221 L620.8 219.1 L617 217.5 Z M627 269.8 L629.5 266 L634.5 262.9 L637 260.9 L647 260.5 L655.8 260.9 L649.5 264 L646.4 267.8 L649.5 271.5 L655.8 275.2 L657 272.1 L653.2 268.4 L657 265.2 L664.5 262.8 L674.5 261.8 L679.5 264.6 L679.5 261.5 L689.5 261.5 L699.5 263.4 L705.8 266.5 L714.5 269.6 L724.5 272.8 L734.5 275.2 L744.5 278.4 L752 280.9 L758.2 285.9 L759.5 287.8 L754.5 290.2 L764.5 293.4 L774.5 296.5 L784.5 299.6 L790.1 301.5 L787 305.9 L782 307.1 L778.2 310.9 L773.2 309.6 L767 307.8 L760.8 304 L754.5 302.1 L748.2 304.6 L754.5 307.8 L762 311.5 L768.2 315.9 L774.5 319 L772 325.2 L764.5 322.8 L757 320.2 L747 318.4 L754.5 322.8 L762 326.5 L767 329 L770.8 330.9 L767 331.5 L760.8 329 L752 326.5 L744.5 324.6 L737 324 L729.5 319.6 L723.2 315.9 L717 314 L712 312.8 L708.2 313.4 L704.5 314.6 L699.5 315 L695.1 314 L694.5 311.5 L698.2 309 L704.5 308.8 L710.8 310.2 L717 309 L720.1 307.1 L715.8 304.6 L722 301.5 L727.6 298.4 L724.5 294.6 L722 291.8 L717 290.9 L712 288.4 L707 285.9 L702 284 L697 282.1 L692 279.6 L688.2 279 L687 281.5 L682 282.8 L674.5 282.1 L667 281.5 L657 282.1 L647 281.5 L637 280.9 L632 277.2 L628.2 274.1 Z M699.5 294.6 L702 292.8 L708.2 292.5 L712 294 L711.4 297.1 L705.8 298.4 L700.8 297.8 Z M713.9 294.2 L718.2 293.8 L721.4 295 L717.6 295.8 Z M703.2 288.8 L707 288 L709.5 289 L706.4 289.8 Z M644.5 293 L646 292.2 L647.2 293.5 L646 294.8 Z M692.6 320.2 L695.8 319.2 L697.6 320.9 L695.1 321.8 Z M698.9 319 L702 318.8 L703.2 320.2 L700.1 320.5 Z M643.2 318.4 L648.2 316.5 L648.9 311.5 L650.1 307.1 L653.2 306.5 L657 309 L663.2 311.5 L669.5 313.4 L674.5 315.9 L679.5 317.1 L682.6 318.4 L678.2 319.6 L673.2 319 L668.2 317.1 L664.5 315.9 L660.8 317.8 L657 320.2 L653.2 321.8 L650.8 319 L647 319 Z M662 325.2 L667 322.8 L672.6 322.8 L670.8 325.2 L665.8 327.1 Z M682 327.8 L684.5 325.9 L687.6 326.5 L687 329 L683.9 330.2 Z M694.5 312.1 L698.2 309.6 L704.5 309 L708.9 310.9 L707 314 L700.8 315 L696.4 314 Z M692.6 319.6 L696.4 319 L697.6 320.9 L694.5 321.8 Z M698.9 318.4 L703.2 318.8 L702 320.2 Z M699.5 295.2 L703.2 292.8 L709.5 292.5 L712 294.6 L710.8 297.1 L704.5 298.4 L700.8 297.8 Z M672.6 378.4 L677 378 L679.5 379.6 L677 380.9 L673.2 380 Z M790.8 215.4 L799.5 214.1 L810.8 213.5 L823.2 212.9 L832 213.5 L833.9 217.2 L835.8 213.5 L848.2 212 L860.8 211 L867 209.1 L879.5 207.9 L886.9 207.2 L888.5 207.2 L926 206 L963.5 205.5 L1001 206.8 L1001 289.8 L990.8 289.8 L976 291.5 L966 293 L954.8 292.2 L951 297.2 L941 303 L926 306 L911 308.5 L906 313.5 L901 323.5 L894.8 332.2 L891 339.8 L886 339 L883.2 336.5 L878.2 332.1 L872 334 L865.8 335.2 L862 332.1 L858.2 327.8 L853.2 325.2 L854.5 322.8 L849.5 320.2 L848.2 318.9 L852 317.2 L854.5 313.5 L847 314.8 L842 311 L833.9 304.8 L832 298.5 L835.8 292.2 L842 289.8 L852 288.5 L853.2 283.5 L849.5 282.2 L843.2 285.4 L834.5 286.6 L827 284.1 L827 280.4 L832 278.2 L842 279.1 L852 280.4 L849.5 276 L842 272.2 L834.5 269.1 L829.5 274.1 L822 273.5 L823.2 271 L829.5 269.8 L828.2 267.2 L823.2 262.2 L817 257.2 L812 254.8 L807 251 L799.5 249.1 L789.5 247.5 L779.5 246.6 L769.5 247.5 L759.5 248.5 L749.5 247.9 L740.8 246 L742 243.5 L752 242.9 L762 242.2 L762.6 240 L754.5 239.1 L742 238.5 L732 237.9 L723.9 236 L729.5 234.1 L739.5 233.2 L749.5 232 L760.8 231 L768.2 229.1 L769.5 226 L764.5 225.4 L755.8 224.1 L767 222.2 L777 220.4 L784.5 219.5 L792 218.5 Z M801 409 L804.8 404.5 L811 400.8 L814.8 395.8 L819.8 390.8 L823.5 389 L822.2 394.5 L819.8 399 L826 398.2 L829.8 400.8 L832.2 404.5 L836 405.8 L838.5 410.8 L837.2 414 L833.5 412 L831 409 L826 410.8 L821 412 L816 410 L811 410.8 L806 410 Z M773.5 397.5 L781 398.2 L787.2 400.8 L781 401 L774.8 399.5 Z M786 411 L790 410 L788.5 412.8 Z M656 555.8 L662.2 550.8 L669.8 549.5 L678.5 550.8 L687.2 554 L693.5 557 L701 559.5 L708.5 562 L716 565 L711 567 L701 567 L697.2 564 L688.5 559.5 L679.8 557 L671 554.5 L666 557 L661 555 Z M693.5 577.5 L698.5 575.8 L704.8 577 L703.5 580 L697.2 580 Z M715.5 575.8 L722.2 574 L723.5 568.2 L731 567 L738.5 568.2 L744.8 572 L749.8 575 L744.8 577 L738.5 577.5 L733.5 579.5 L728.5 576.5 L721 577.5 Z M756.5 576.5 L761 575 L767.2 575.8 L766 578.2 L758.5 578.5 Z M696 534.5 L699.8 533.2 L701 538.2 L697.2 540 Z M778.2 618 L783.2 617.5 L782.5 620.5 L779 620.5 Z M252.5 567.5 L255.5 566.8 L257.6 569.6 L255.6 572.2 L253 571.4 Z" fill="#e9e9d8" stroke="#7f9650" stroke-width="1.1" stroke-linejoin="round"/>
<path d="M731.5 622.5 L734 625 L734.5 628.5 L732.5 630.2 L730 629 L729.2 625.5 Z" fill="#6995b0" stroke="#7f9650" stroke-width="1"/>
<path d="M337 284.8 L337 337.5 M337.4 337.8 L344.5 337.5 L348.2 338 L353.2 341.5 L362 342.1 L368.2 340.2 L372 342.8 L379.5 347.8 L384.5 352.8 L389.5 357.8 L398.2 361.5 L400.8 365.2 L402 369 M441 402 L597 402 L598.2 399.5 L599.5 403.2 L609.5 405.8 L623.2 407.8 L634.5 406.5 L642 409.5 L652 413.2 L662 418.2 L669.5 423.2 L671.5 432 L668.2 438.2 L665.8 440.8 L669.5 443.2 L679.5 440.8 L688.2 438.2 L689.5 433.2 L702 432 L709.5 427 M708.5 427 L712.2 424.5 L733.5 424 L739.8 416.5 L746 412 L752.2 411.5 L753.5 420.8 L756 424.5 L761 425 M473.2 495 L485.8 494.5 L507 502 L523.2 502 L524.5 500 L533.2 500 L539.5 505.8 L543.2 510.8 L552 515 L555.8 511.2 L563.2 510.8 L569.5 519.5 L574.5 528.2 L584.5 532.5 M613.2 594.8 L619.5 588.5 L623.2 586 L622 581 L629.5 579.8 L638.2 579.8 M633.2 579.8 L633.2 588.5 L637 592.2 M624.5 603.5 L629.5 598.5 L632 594.8 L637 592.2 M639.5 608 L647 602.2 L654.5 598.5 L663.2 598.5 M629.5 598.5 L637 601 L643.2 604.8 M650.8 619.8 L657 616 M665.8 633.5 L665.8 623.5 M697 638.5 L700.8 634 M730.8 616 L725.8 622.2 L723.2 628.5 L725.8 636 L732 641 L739.5 642.2 L747 644.8 L754.5 647.2 L753.2 656 L754.5 663.5 L755.8 669.8 M690.8 671 L697 676 L704.5 678.5 L710.8 681 L719.5 689.8 L727 693.5 L737 694.8 L740.8 698.5 L739.5 704.8 M755.8 669.8 L747 671 L740.8 673.5 L743.2 681 L742 691 L740.8 698.5 M755.8 669.8 L759.5 676 L767 676 L774.5 669.8 L773.2 662.2 L770.8 657.2 L779.5 656 L788.2 653.5 L794.5 651 M797 633.5 L793.2 641 L790.8 647.2 L794.5 651 L798.2 656 L797 666 L800.8 672.2 L807 673.5 M812 642.2 L809.5 653.5 L812 661 L815.8 668.5 L807 673.5 M829.5 649 L829.5 658.5 L832 666 L824.5 668.5 L815.8 668.5 M839.5 651 L845.8 656 L842 662.2 L838.2 667.2 L832 666 M679.5 691 L683.2 693.5 L682 703.5 L689.5 708.5 L697 698.5 L707 692.2 L710.8 684.8 L710.8 681 M739.5 704.8 L732 706 L724.5 708.5 L722 716 L718.2 722.2 L720.8 729.8 L727 734.8 L737 736 L738.2 741.8 M752 741.8 L759.5 737.2 L767 736 L768.2 741.8 M854.8 674 L850.4 680.2 L846 685.2 L839.8 689.6 L846 689 L847.9 694 L850.4 692.1 L857.2 691.5 L858.5 694 L862.2 689.6 L864.1 687.1 M851 682.8 L857.2 681.8 L863.5 682.8 M850.4 680.9 L849.1 686.5 L851 690.2" fill="none" stroke="#7f9650" stroke-width="1" stroke-linejoin="round"/>
<path d="M228.2 555.5 h1.6 M239.2 558.6 h1.6 M246.2 562 h1.6 M242.7 670 h1.6 M340.2 731.5 h1.6 M347.2 736 h1.6 M465 515.4 h1.6 M506.2 573.8 h1.6 M532.2 557.6 h1.6 M704 538.2 h1.6 M709 543.2 h1.6 M714 545.8 h1.6 M716.4 552 h1.6 M722.7 553.2 h1.6 M730.2 557 h1.6 M720.2 560.8 h1.6 M676.4 570.8 h1.6 M960.2 456.5 h1.6 M976.4 461.2 h1.6 M983.2 460.8 h1.6 M769.7 496.5 h1.6 M618.7 683 h1.6 M621.2 684 h1.6 M623.7 685 h1.6 M628.7 685 h1.6 M740 611 h1.6 M748.7 612.2 h1.6 M793.7 616.5 h1.6 M721.2 559.8 h1.6 M718.7 561 h1.6" stroke="#7f9650" stroke-width="1.4" fill="none"/>
<path d="M624.5 216.6 L634.5 215.8 L644.5 216.2 L654.5 215.4" fill="none" stroke="#7f9650" stroke-width="1.5" stroke-linecap="round" stroke-linejoin="round" stroke-dasharray="2.2 0.9" opacity="0.85"/>
<path d="M622 218.5 L634.5 219.8 L647 221 L659.5 219.8 L672 218.5 L684.5 219.8 L703.2 217.9" fill="none" stroke="#7f9650" stroke-width="2" stroke-linecap="round" stroke-linejoin="round" stroke-dasharray="2.2 0.9" opacity="0.85"/>
<path d="M649.5 226 L659.5 225.4 L672 226.6 L684.5 227.2" fill="none" stroke="#7f9650" stroke-width="1.5" stroke-linecap="round" stroke-linejoin="round" stroke-dasharray="2.2 0.9" opacity="0.85"/>
<path d="M690.8 230.4 L703.2 229.1 L715.8 230.4" fill="none" stroke="#7f9650" stroke-width="2.5" stroke-linecap="round" stroke-linejoin="round" stroke-dasharray="2.2 0.9" opacity="0.85"/>
<path d="M667 212.9 L677 213.5 L687 214.1" fill="none" stroke="#7f9650" stroke-width="1.5" stroke-linecap="round" stroke-linejoin="round" stroke-dasharray="2.2 0.9" opacity="0.85"/>
<path d="M654.5 233.5 L664.5 232.9 L672 236" fill="none" stroke="#7f9650" stroke-width="1.5" stroke-linecap="round" stroke-linejoin="round" stroke-dasharray="2.2 0.9" opacity="0.85"/>
<path d="M672 239.8 L684.5 241 L694.5 242.2" fill="none" stroke="#7f9650" stroke-width="1.5" stroke-linecap="round" stroke-linejoin="round" stroke-dasharray="2.2 0.9" opacity="0.85"/>
<path d="M590.8 224.8 L599.5 224.1 L604.5 226" fill="none" stroke="#7f9650" stroke-width="2" stroke-linecap="round" stroke-linejoin="round" stroke-dasharray="2.2 0.9" opacity="0.85"/>
<path d="M603.2 229.8 L614.5 230.4 L624.5 230" fill="none" stroke="#7f9650" stroke-width="1.5" stroke-linecap="round" stroke-linejoin="round" stroke-dasharray="2.2 0.9" opacity="0.85"/>
<path d="M644.5 238.5 L654.5 236.6 L659.5 238.5 L667 237.2" fill="none" stroke="#7f9650" stroke-width="2" stroke-linecap="round" stroke-linejoin="round" stroke-dasharray="2.2 0.9" opacity="0.85"/>
<path d="M740.8 216.6 L754.5 216 L769.5 215.8 L779.5 214.1" fill="none" stroke="#7f9650" stroke-width="2" stroke-linecap="round" stroke-linejoin="round" stroke-dasharray="2.2 0.9" opacity="0.85"/>
<path d="M728.2 224.8 L737 224.1 L747 221" fill="none" stroke="#7f9650" stroke-width="2" stroke-linecap="round" stroke-linejoin="round" stroke-dasharray="2.2 0.9" opacity="0.85"/>
<path d="M727 240.4 L742 240.8 L762 241" fill="none" stroke="#7f9650" stroke-width="2.5" stroke-linecap="round" stroke-linejoin="round" stroke-dasharray="2.2 0.9" opacity="0.85"/>
<path d="M733.2 243.5 L742 244.8 L752 244.8" fill="none" stroke="#7f9650" stroke-width="2" stroke-linecap="round" stroke-linejoin="round" stroke-dasharray="2.2 0.9" opacity="0.85"/>
<path d="M812 254.8 L817 257.9 L823.2 262.9 L828.2 267.9" fill="none" stroke="#7f9650" stroke-width="3" stroke-linecap="round" stroke-linejoin="round" stroke-dasharray="2.2 0.9" opacity="0.85"/>
<path d="M829.5 271 L837 273.5 L847 276.6 L851.4 281" fill="none" stroke="#7f9650" stroke-width="3" stroke-linecap="round" stroke-linejoin="round" stroke-dasharray="2.2 0.9" opacity="0.85"/>
<path d="M849.5 282.9 L852.6 287.2" fill="none" stroke="#7f9650" stroke-width="3" stroke-linecap="round" stroke-linejoin="round" stroke-dasharray="2.2 0.9" opacity="0.85"/>
<path d="M833.2 292.9 L842 291.6 L853.2 294.1" fill="none" stroke="#7f9650" stroke-width="3" stroke-linecap="round" stroke-linejoin="round" stroke-dasharray="2.2 0.9" opacity="0.85"/>
<path d="M832.6 297.2 L842 296.6 L853.9 297.9" fill="none" stroke="#7f9650" stroke-width="3" stroke-linecap="round" stroke-linejoin="round" stroke-dasharray="2.2 0.9" opacity="0.85"/>
<path d="M833.9 302.2 L843.2 301 L852 299.8" fill="none" stroke="#7f9650" stroke-width="2.5" stroke-linecap="round" stroke-linejoin="round" stroke-dasharray="2.2 0.9" opacity="0.85"/>
<path d="M837 307.2 L845.8 306.6 L850.8 307.2" fill="none" stroke="#7f9650" stroke-width="2.5" stroke-linecap="round" stroke-linejoin="round" stroke-dasharray="2.2 0.9" opacity="0.85"/>
<path d="M843.2 312.9 L849.5 311 L855.8 314.1" fill="none" stroke="#7f9650" stroke-width="3" stroke-linecap="round" stroke-linejoin="round" stroke-dasharray="2.2 0.9" opacity="0.85"/>
<path d="M833.9 297.8 L842 296.5 L853.2 295.2" fill="none" stroke="#7f9650" stroke-width="3" stroke-linecap="round" stroke-linejoin="round" stroke-dasharray="2.2 0.9" opacity="0.85"/>
<path d="M833.2 301.5 L842 300.9 L850.8 300.2" fill="none" stroke="#7f9650" stroke-width="2.5" stroke-linecap="round" stroke-linejoin="round" stroke-dasharray="2.2 0.9" opacity="0.85"/>
<path d="M837 306.5 L844.5 307.8 L850.8 307.1" fill="none" stroke="#7f9650" stroke-width="2.5" stroke-linecap="round" stroke-linejoin="round" stroke-dasharray="2.2 0.9" opacity="0.85"/>
<path d="M843.2 312.8 L849.5 312.1 L855.8 314.6" fill="none" stroke="#7f9650" stroke-width="3" stroke-linecap="round" stroke-linejoin="round" stroke-dasharray="2.2 0.9" opacity="0.85"/>
<path d="M847 318.4 L854.5 322.1" fill="none" stroke="#7f9650" stroke-width="3" stroke-linecap="round" stroke-linejoin="round" stroke-dasharray="2.2 0.9" opacity="0.85"/>
<path d="M854.5 325.9 L862 331.5 L867 334.6" fill="none" stroke="#7f9650" stroke-width="3" stroke-linecap="round" stroke-linejoin="round" stroke-dasharray="2.2 0.9" opacity="0.85"/>
<path d="M872 334 L878.2 332.8 L885.8 338.4" fill="none" stroke="#7f9650" stroke-width="3" stroke-linecap="round" stroke-linejoin="round" stroke-dasharray="2.2 0.9" opacity="0.85"/>
<path d="M901 323.5 L894.8 332.2 L891 338.5" fill="none" stroke="#7f9650" stroke-width="2" stroke-linecap="round" stroke-linejoin="round" stroke-dasharray="2.2 0.9" opacity="0.85"/>
<path d="M906 313.5 L911 309 L926 306.5" fill="none" stroke="#7f9650" stroke-width="1.5" stroke-linecap="round" stroke-linejoin="round" stroke-dasharray="2.2 0.9" opacity="0.85"/>
<path d="M866 210.5 L888.5 212.2 L911 211" fill="none" stroke="#7f9650" stroke-width="2" stroke-linecap="round" stroke-linejoin="round" stroke-dasharray="2.2 0.9" opacity="0.85"/>
<path d="M936 209 L963.5 208 L986 209" fill="none" stroke="#7f9650" stroke-width="1.5" stroke-linecap="round" stroke-linejoin="round" stroke-dasharray="2.2 0.9" opacity="0.85"/>
<path d="M951 214.8 L973.5 213.5 L990.8 213" fill="none" stroke="#7f9650" stroke-width="2" stroke-linecap="round" stroke-linejoin="round" stroke-dasharray="2.2 0.9" opacity="0.85"/>
<path d="M976 264.8 L990.8 266" fill="none" stroke="#7f9650" stroke-width="2" stroke-linecap="round" stroke-linejoin="round" stroke-dasharray="2.2 0.9" opacity="0.85"/>
<path d="M973.5 274.8 L990.8 274" fill="none" stroke="#7f9650" stroke-width="2" stroke-linecap="round" stroke-linejoin="round" stroke-dasharray="2.2 0.9" opacity="0.85"/>
<path d="M973.5 279.8 L990.8 281" fill="none" stroke="#7f9650" stroke-width="2" stroke-linecap="round" stroke-linejoin="round" stroke-dasharray="2.2 0.9" opacity="0.85"/>
<path d="M678.2 269.6 L687 269 L695.8 270.9" fill="none" stroke="#7f9650" stroke-width="2.5" stroke-linecap="round" stroke-linejoin="round" stroke-dasharray="2.2 0.9" opacity="0.85"/>
<path d="M707 270.9 L717 272.8 L724.5 274.6" fill="none" stroke="#7f9650" stroke-width="3" stroke-linecap="round" stroke-linejoin="round" stroke-dasharray="2.2 0.9" opacity="0.85"/>
<path d="M727 277.8 L735.8 277.8 L744.5 280.2" fill="none" stroke="#7f9650" stroke-width="3" stroke-linecap="round" stroke-linejoin="round" stroke-dasharray="2.2 0.9" opacity="0.85"/>
<path d="M740.8 282.8 L749.5 284 L757 287.1" fill="none" stroke="#7f9650" stroke-width="3.5" stroke-linecap="round" stroke-linejoin="round" stroke-dasharray="2.2 0.9" opacity="0.85"/>
<path d="M749.5 289 L759.5 291.8 L769.5 295.2 L778.2 298" fill="none" stroke="#7f9650" stroke-width="2.5" stroke-linecap="round" stroke-linejoin="round" stroke-dasharray="2.2 0.9" opacity="0.85"/>
<path d="M774.5 298.4 L783.2 300.9 L788.2 302.8" fill="none" stroke="#7f9650" stroke-width="3" stroke-linecap="round" stroke-linejoin="round" stroke-dasharray="2.2 0.9" opacity="0.85"/>
<path d="M782 306.5 L787 304" fill="none" stroke="#7f9650" stroke-width="3" stroke-linecap="round" stroke-linejoin="round" stroke-dasharray="2.2 0.9" opacity="0.85"/>
<path d="M753.2 302.8 L760.8 305.9 L767 308.4 L773.2 310.5" fill="none" stroke="#7f9650" stroke-width="2" stroke-linecap="round" stroke-linejoin="round" stroke-dasharray="2.2 0.9" opacity="0.85"/>
<path d="M767 314 L772 319 L773.2 324" fill="none" stroke="#7f9650" stroke-width="2.5" stroke-linecap="round" stroke-linejoin="round" stroke-dasharray="2.2 0.9" opacity="0.85"/>
<path d="M747 319 L757 321.5 L765.8 325.9" fill="none" stroke="#7f9650" stroke-width="2" stroke-linecap="round" stroke-linejoin="round" stroke-dasharray="2.2 0.9" opacity="0.85"/>
<path d="M649.5 266.5 L657 267.1 L659.5 270.9" fill="none" stroke="#7f9650" stroke-width="2" stroke-linecap="round" stroke-linejoin="round" stroke-dasharray="2.2 0.9" opacity="0.85"/>
<path d="M652 274 L657 274.6" fill="none" stroke="#7f9650" stroke-width="2.5" stroke-linecap="round" stroke-linejoin="round" stroke-dasharray="2.2 0.9" opacity="0.85"/>
<path d="M712 312.1 L722 314.6 L729.5 319 L737 323.4" fill="none" stroke="#7f9650" stroke-width="2" stroke-linecap="round" stroke-linejoin="round" stroke-dasharray="2.2 0.9" opacity="0.85"/>
<path d="M771.4 337.8 L775.8 342.1 L780.8 347.1 L785.1 352.1 L787 357.8 L792 361.5 L797 366.5" fill="none" stroke="#7f9650" stroke-width="2.5" stroke-linecap="round" stroke-linejoin="round" stroke-dasharray="2.2 0.9" opacity="0.85"/>
<path d="M763.2 347.1 L767 342.1 L769.5 338.4" fill="none" stroke="#7f9650" stroke-width="2" stroke-linecap="round" stroke-linejoin="round" stroke-dasharray="2.2 0.9" opacity="0.85"/>
<path d="M740.8 346.5 L747 345.2 L752 348.4" fill="none" stroke="#7f9650" stroke-width="1.5" stroke-linecap="round" stroke-linejoin="round" stroke-dasharray="2.2 0.9" opacity="0.85"/>
<path d="M784.5 352.1 L787 357.1 L792 362.1 L798.2 367.1 L809.5 369" fill="none" stroke="#7f9650" stroke-width="2.5" stroke-linecap="round" stroke-linejoin="round" stroke-dasharray="2.2 0.9" opacity="0.85"/>
<path d="M794.5 376.5 L803.2 374.6 L810.8 373.4" fill="none" stroke="#7f9650" stroke-width="2.5" stroke-linecap="round" stroke-linejoin="round" stroke-dasharray="2.2 0.9" opacity="0.85"/>
<path d="M813.2 375.2 L819.5 375.9 L821.4 381.5 L820.8 385.9" fill="none" stroke="#7f9650" stroke-width="2" stroke-linecap="round" stroke-linejoin="round" stroke-dasharray="2.2 0.9" opacity="0.85"/>
<path d="M823.2 388.4 L818.2 394 L813.2 399 L808.2 402.8" fill="none" stroke="#7f9650" stroke-width="2.5" stroke-linecap="round" stroke-linejoin="round" stroke-dasharray="2.2 0.9" opacity="0.85"/>
<path d="M817 397.8 L823.2 399 L829.5 399 L833.2 402.1 L835.8 405.2" fill="none" stroke="#7f9650" stroke-width="2" stroke-linecap="round" stroke-linejoin="round" stroke-dasharray="2.2 0.9" opacity="0.85"/>
<path d="M293.2 336 L299.5 336 L305.8 335.4" fill="none" stroke="#7f9650" stroke-width="3" stroke-linecap="round" stroke-linejoin="round" stroke-dasharray="2.2 0.9" opacity="0.85"/>
<path d="M260.8 357.2 L267 354.1 L272.6 350.4" fill="none" stroke="#7f9650" stroke-width="2.5" stroke-linecap="round" stroke-linejoin="round" stroke-dasharray="2.2 0.9" opacity="0.85"/>
<path d="M359.5 347.1 L365.8 353.4 L374.5 360.2 L384.5 367.1 L392 370.9 L399.5 375.2 L407 382.1 L413.2 388.4 L422 392.1 L432 397.8 L439.5 400.9" fill="none" stroke="#7f9650" stroke-width="3" stroke-linecap="round" stroke-linejoin="round" stroke-dasharray="2.2 0.9" opacity="0.85"/>
<path d="M367 344 L374.5 350.2 L380.8 356.5 L387 362.1 L393.2 365.2 L399.5 368.4" fill="none" stroke="#7f9650" stroke-width="2.5" stroke-linecap="round" stroke-linejoin="round" stroke-dasharray="2.2 0.9" opacity="0.85"/>
<path d="M369.5 351.5 L377 357.8 L385.8 365.2" fill="none" stroke="#7f9650" stroke-width="2.5" stroke-linecap="round" stroke-linejoin="round" stroke-dasharray="2.2 0.9" opacity="0.85"/>
<path d="M407 377.8 L414.5 384 L418.2 389" fill="none" stroke="#7f9650" stroke-width="2" stroke-linecap="round" stroke-linejoin="round" stroke-dasharray="2.2 0.9" opacity="0.85"/>
<path d="M424.5 394 L432 395.9 L438.2 399" fill="none" stroke="#7f9650" stroke-width="2" stroke-linecap="round" stroke-linejoin="round" stroke-dasharray="2.2 0.9" opacity="0.85"/>
<path d="M384.5 375.2 L389.5 380.2 L392.6 383.4" fill="none" stroke="#7f9650" stroke-width="1.5" stroke-linecap="round" stroke-linejoin="round" stroke-dasharray="2.2 0.9" opacity="0.85"/>
<path d="M412 393.4 L422 399 L432 404.6" fill="none" stroke="#7f9650" stroke-width="1.2" stroke-linecap="round" stroke-linejoin="round" stroke-dasharray="2.2 0.9" opacity="0.85"/>
<rect x="572.4" y="567.6" width="5.4" height="5.4" rx="0.9" fill="#f8f5f5" stroke="#121212" stroke-width="1.25"/><rect x="574.25" y="569.45" width="1.7" height="1.7" rx="0.4" fill="#a00012"/><rect x="630.9" y="580.6" width="5.4" height="5.4" rx="0.9" fill="#f8f5f5" stroke="#121212" stroke-width="1.25"/><rect x="632.75" y="582.45" width="1.7" height="1.7" rx="0.4" fill="#a00012"/><rect x="621.2" y="594.9" width="5.4" height="5.4" rx="0.9" fill="#f8f5f5" stroke="#121212" stroke-width="1.25"/><rect x="623.05" y="596.75" width="1.7" height="1.7" rx="0.4" fill="#a00012"/><rect x="628.6" y="600.2" width="5.4" height="5.4" rx="0.9" fill="#f8f5f5" stroke="#121212" stroke-width="1.25"/><rect x="630.45" y="602.05" width="1.7" height="1.7" rx="0.4" fill="#a00012"/><rect x="639.9" y="597.6" width="5.4" height="5.4" rx="0.9" fill="#f8f5f5" stroke="#121212" stroke-width="1.25"/><rect x="641.75" y="599.45" width="1.7" height="1.7" rx="0.4" fill="#a00012"/><rect x="645.4" y="608.9" width="5.4" height="5.4" rx="0.9" fill="#f8f5f5" stroke="#121212" stroke-width="1.25"/><rect x="647.25" y="610.75" width="1.7" height="1.7" rx="0.4" fill="#a00012"/><rect x="657.6" y="621.4" width="5.4" height="5.4" rx="0.9" fill="#f8f5f5" stroke="#121212" stroke-width="1.25"/><rect x="659.45" y="623.25" width="1.7" height="1.7" rx="0.4" fill="#a00012"/><rect x="683.6" y="626.6" width="5.4" height="5.4" rx="0.9" fill="#f8f5f5" stroke="#121212" stroke-width="1.25"/><rect x="685.45" y="628.45" width="1.7" height="1.7" rx="0.4" fill="#a00012"/><rect x="695.9" y="535.6" width="5.4" height="5.4" rx="0.9" fill="#f8f5f5" stroke="#121212" stroke-width="1.25"/><rect x="697.75" y="537.45" width="1.7" height="1.7" rx="0.4" fill="#a00012"/><rect x="667.2" y="547.2" width="5.4" height="5.4" rx="0.9" fill="#f8f5f5" stroke="#121212" stroke-width="1.25"/><rect x="669.05" y="549.05" width="1.7" height="1.7" rx="0.4" fill="#a00012"/><rect x="699.2" y="575.9" width="5.4" height="5.4" rx="0.9" fill="#f8f5f5" stroke="#121212" stroke-width="1.25"/><rect x="701.05" y="577.75" width="1.7" height="1.7" rx="0.4" fill="#a00012"/><rect x="724.4" y="572.6" width="5.4" height="5.4" rx="0.9" fill="#f8f5f5" stroke="#121212" stroke-width="1.25"/><rect x="726.25" y="574.45" width="1.7" height="1.7" rx="0.4" fill="#a00012"/><rect x="738.6" y="572.6" width="5.4" height="5.4" rx="0.9" fill="#f8f5f5" stroke="#121212" stroke-width="1.25"/><rect x="740.45" y="574.45" width="1.7" height="1.7" rx="0.4" fill="#a00012"/><rect x="760.4" y="573.6" width="5.4" height="5.4" rx="0.9" fill="#f8f5f5" stroke="#121212" stroke-width="1.25"/><rect x="762.25" y="575.45" width="1.7" height="1.7" rx="0.4" fill="#a00012"/><rect x="784.4" y="580.6" width="5.4" height="5.4" rx="0.9" fill="#f8f5f5" stroke="#121212" stroke-width="1.25"/><rect x="786.25" y="582.45" width="1.7" height="1.7" rx="0.4" fill="#a00012"/><rect x="778.9" y="579.6" width="5.4" height="5.4" rx="0.9" fill="#f8f5f5" stroke="#121212" stroke-width="1.25"/><rect x="780.75" y="581.45" width="1.7" height="1.7" rx="0.4" fill="#a00012"/><rect x="786.6" y="591.2" width="5.4" height="5.4" rx="0.9" fill="#f8f5f5" stroke="#121212" stroke-width="1.25"/><rect x="788.45" y="593.05" width="1.7" height="1.7" rx="0.4" fill="#a00012"/><rect x="787.6" y="603.6" width="5.4" height="5.4" rx="0.9" fill="#f8f5f5" stroke="#121212" stroke-width="1.25"/><rect x="789.45" y="605.45" width="1.7" height="1.7" rx="0.4" fill="#a00012"/><rect x="789.2" y="598.6" width="5.4" height="5.4" rx="0.9" fill="#f8f5f5" stroke="#121212" stroke-width="1.25"/><rect x="791.05" y="600.45" width="1.7" height="1.7" rx="0.4" fill="#a00012"/><rect x="796.9" y="603.6" width="5.4" height="5.4" rx="0.9" fill="#f8f5f5" stroke="#121212" stroke-width="1.25"/><rect x="798.75" y="605.45" width="1.7" height="1.7" rx="0.4" fill="#a00012"/><rect x="784.4" y="609.6" width="5.4" height="5.4" rx="0.9" fill="#f8f5f5" stroke="#121212" stroke-width="1.25"/><rect x="786.25" y="611.45" width="1.7" height="1.7" rx="0.4" fill="#a00012"/><rect x="786.2" y="617.6" width="5.4" height="5.4" rx="0.9" fill="#f8f5f5" stroke="#121212" stroke-width="1.25"/><rect x="788.05" y="619.45" width="1.7" height="1.7" rx="0.4" fill="#a00012"/><rect x="755.4" y="618.4" width="5.4" height="5.4" rx="0.9" fill="#f8f5f5" stroke="#121212" stroke-width="1.25"/><rect x="757.25" y="620.25" width="1.7" height="1.7" rx="0.4" fill="#a00012"/><rect x="805.2" y="639.6" width="5.4" height="5.4" rx="0.9" fill="#f8f5f5" stroke="#121212" stroke-width="1.25"/><rect x="807.05" y="641.45" width="1.7" height="1.7" rx="0.4" fill="#a00012"/><rect x="822.2" y="645.2" width="5.4" height="5.4" rx="0.9" fill="#f8f5f5" stroke="#121212" stroke-width="1.25"/><rect x="824.05" y="647.05" width="1.7" height="1.7" rx="0.4" fill="#a00012"/><rect x="838.4" y="649.9" width="5.4" height="5.4" rx="0.9" fill="#f8f5f5" stroke="#121212" stroke-width="1.25"/><rect x="840.25" y="651.75" width="1.7" height="1.7" rx="0.4" fill="#a00012"/><rect x="714.6" y="651.6" width="5.4" height="5.4" rx="0.9" fill="#f8f5f5" stroke="#121212" stroke-width="1.25"/><rect x="716.45" y="653.45" width="1.7" height="1.7" rx="0.4" fill="#a00012"/><rect x="689.4" y="679.6" width="5.4" height="5.4" rx="0.9" fill="#f8f5f5" stroke="#121212" stroke-width="1.25"/><rect x="691.25" y="681.45" width="1.7" height="1.7" rx="0.4" fill="#a00012"/><rect x="705.9" y="419.9" width="5.4" height="5.4" rx="0.9" fill="#f8f5f5" stroke="#121212" stroke-width="1.25"/><rect x="707.75" y="421.75" width="1.7" height="1.7" rx="0.4" fill="#a00012"/><rect x="698.4" y="456.9" width="5.4" height="5.4" rx="0.9" fill="#f8f5f5" stroke="#121212" stroke-width="1.25"/><rect x="700.25" y="458.75" width="1.7" height="1.7" rx="0.4" fill="#a00012"/>
<!--/LAND-->
<defs>
<radialGradient id="pg" cx="50%" cy="50%" r="50%"><stop offset="0" stop-color="#e6e6e6"/><stop offset="0.4" stop-color="#efefef"/><stop offset="0.75" stop-color="#fcfcfc"/><stop offset="1" stop-color="#ffffff"/></radialGradient>
<linearGradient id="bg1" x1="0" x2="1"><stop offset="0" stop-color="#e0e0e0"/><stop offset="0.3" stop-color="#fafafa"/><stop offset="0.8" stop-color="#f2f2f2"/><stop offset="1" stop-color="#dadada"/></linearGradient>
<linearGradient id="bg2" x1="0" x2="0" y1="0" y2="1"><stop offset="0" stop-color="#ffffff"/><stop offset="0.4" stop-color="#fbfbfb"/><stop offset="1" stop-color="#d8d8d8"/></linearGradient>
<linearGradient id="bg3" x1="0" x2="0" y1="0" y2="1"><stop offset="0" stop-color="#ffffff"/><stop offset="0.15" stop-color="#f4f4f4"/><stop offset="0.3" stop-color="#a2a2a2"/><stop offset="1" stop-color="#e6e6e6"/></linearGradient><linearGradient id="bg2b" x1="0" x2="0" y1="0" y2="1"><stop offset="0" stop-color="#d6d6d6"/><stop offset="1" stop-color="#ffffff"/></linearGradient>
<filter id="sh" x="-20%" y="-20%" width="140%" height="140%"><feGaussianBlur stdDeviation="0.9"/></filter>
</defs>
<!-- pan control -->
<circle cx="239.6" cy="213.8" r="26.9" fill="#34434e" opacity="0.6" filter="url(#sh)"/>
<circle cx="238.7" cy="212.6" r="26.5" fill="url(#pg)" stroke="#8e9499" stroke-width="0.7"/>
<path d="M239 191 L243.6 199.8 H234.4 Z M239 233.9 L243.6 225 H234.4 Z M217.3 213 L226 208.4 V217.6 Z M259.9 213 L251 208.4 V217.6 Z" fill="#0660d8"/>
<circle cx="239" cy="213" r="4.6" fill="#0a84f6" stroke="#3a5cb0" stroke-width="1"/>
<!-- zoom slider -->
<rect x="235.3" y="270" width="8.6" height="122" fill="#2c3a44" opacity="0.35" filter="url(#sh)"/>
<rect x="235.4" y="270" width="7.6" height="122" fill="url(#bg1)"/>
<path d="M235.4 270 V392 M243 270 V392" stroke="#6e6e6e" stroke-width="0.8"/>
<path d="M229.8 272 V262 A8.6 8.6 0 0 1 247 262 V272 Z" fill="#23323e" opacity="0.7" filter="url(#sh)" transform="translate(0.5 0.7)"/>
<path d="M229.8 272 V262 A8.6 8.6 0 0 1 247 262 V272 Z" fill="url(#bg2)" stroke="#70787e" stroke-width="0.6"/>
<path d="M234.6 263.5 H243 M239.1 259.3 V267.8" stroke="#3c3c3c" stroke-width="1.5"/>
<path d="M234.6 263.5 H238" stroke="#b4b4b4" stroke-width="1.5"/>
<path d="M229.4 389.3 V400.6 A8.8 8.8 0 0 0 247 400.6 V389.3 Z" fill="#23323e" opacity="0.7" filter="url(#sh)" transform="translate(0.5 0.7)"/>
<path d="M229.4 389.3 V400.6 A8.8 8.8 0 0 0 247 400.6 V389.3 Z" fill="url(#bg2b)" stroke="#70787e" stroke-width="0.6"/>
<path d="M234 398.4 H242.6" stroke="#444" stroke-width="1.8"/>
<path d="M229.4 365 L232.8 362.3 H244.4 L247.9 365 V369 L244.4 371.6 H232.8 L229.4 369 Z" fill="#23323e" opacity="0.7" filter="url(#sh)" transform="translate(0.5 0.7)"/>
<path d="M229.4 365 L232.8 362.3 H244.4 L247.9 365 V369 L244.4 371.6 H232.8 L229.4 369 Z" fill="url(#bg3)" stroke="#3c3c3c" stroke-width="0.7" stroke-linejoin="round"/>
<!-- logo -->
<g id="logo">
<filter id="glow" x="-10%" y="-40%" width="120%" height="180%"><feGaussianBlur stdDeviation="1.1"/></filter>
<g fill="#eef4f8" stroke="#eef4f8" stroke-width="2.4" opacity="0.62" filter="url(#glow)" stroke-linejoin="round"><text x="929.8" y="711.9" font-family="Liberation Sans,sans-serif" font-size="7" textLength="54.2" lengthAdjust="spacing">POWERED BY</text><text x="929" y="724" font-family="Liberation Sans,sans-serif" font-size="12.2" font-weight="bold" font-style="italic" textLength="55" lengthAdjust="spacing">ThinkGeo</text><path d="M920.2 712.6 L926.6 715.3 V723.6 L920.2 726.8 L913.8 723.6 V715.3 Z"/></g>
<text x="929.8" y="711.9" font-family="Liberation Sans,sans-serif" font-size="7" textLength="54.2" lengthAdjust="spacing" fill="#1f3a54" stroke="#1f3a54" stroke-width="0.35">POWERED BY</text>
<text x="929" y="724" font-family="Liberation Sans,sans-serif" font-size="12.2" font-weight="bold" font-style="italic" textLength="55" lengthAdjust="spacing" fill="#173a56">ThinkGeo</text>
<path d="M920.2 712.8 L926.5 715.4 V723.5 L920.2 726.7 L913.9 723.5 V715.4 Z" fill="#d4d8e2" stroke="#4a5f94" stroke-width="0.8" stroke-linejoin="round"/>
<path d="M920.2 713 L926.3 715.5 L920.2 718.4 L914.1 715.5 Z" fill="#3c5590"/>
<path d="M916.8 715.5 L920.2 714.2 L923.6 715.5 L920.2 717 Z" fill="#2c4278"/>
<path d="M914.3 715.9 L920 718.6 V726.2 L914.3 723.3 Z" fill="#dcdfe8"/>
<path d="M926.1 715.9 L920.4 718.6 V726.2 L926.1 723.3 Z" fill="#b4bacb"/>
<path d="M920.2 718.4 V726.6" stroke="#4a5f94" stroke-width="0.8"/>
</g>

</svg>
<div class="a" style="left:547px;top:181px;width:104px;height:12px;background:#2d2d30"></div>
<div class="a" style="left:587px;top:185px;width:24px;height:1px;background:#555"></div>
<div class="a" style="left:587px;top:187px;width:24px;height:1px;background:#555"></div>
</div>

<!-- ===== DIAGNOSTIC TOOLS ===== -->
<div id="diag">
<div class="a" style="left:1021px;top:98px;width:307px;height:621px;background:#252526;border:1px solid #3f3f46"></div>
<div class="a" style="left:1022px;top:99px;width:305px;height:47px;background:#2d2d30"></div>
<div class="t" style="left:1026.4px;top:101px;color:#d0d0d0;letter-spacing:-0.067px">Diagnostic Tools</div>
<div class="dots" style="left:1120px;top:106px;width:152px"></div>
<div class="arr" style="left:1279px;top:106px;border-left-width:4px;border-right-width:4px;border-top-width:4px;border-top-color:#f1f1f1"></div>
<svg class="a" style="left:1295px;top:102px" width="9" height="12" viewBox="0 0 9 12"><path d="M2.5 1 H6.5 V6.5 H2.5 Z M1 6.5 H8 M4.5 6.5 V11.5" stroke="#f1f1f1" fill="none" stroke-width="1.1"/><rect x="5" y="1" width="1.5" height="5.5" fill="#f1f1f1"/></svg>
<svg class="a" style="left:1311px;top:103px" width="10" height="10" viewBox="0 0 10 10"><path d="M1 1 L9 9 M9 1 L1 9" stroke="#f1f1f1" stroke-width="1.4"/></svg>
<!-- toolbar icons -->
<svg class="a" style="left:1031px;top:123px" width="17" height="17" viewBox="0 0 17 17"><circle cx="8.5" cy="8.5" r="5.3" fill="none" stroke="#d8d8d8" stroke-width="1.6"/><circle cx="8.5" cy="8.5" r="1.9" fill="none" stroke="#d8d8d8" stroke-width="1.3"/><path d="M8.5 0.8 V3 M8.5 14 V16.2 M0.8 8.5 H3 M14 8.5 H16.2 M3 3 L4.7 4.7 M12.3 12.3 L14 14 M14 3 L12.3 4.7 M3 14 L4.7 12.3" stroke="#d8d8d8" stroke-width="2.2"/></svg>
<div class="sep" style="left:1058px;top:121px;height:21px"></div>
<svg class="a" style="left:1065px;top:123px" width="18" height="18" viewBox="0 0 18 18"><path d="M1.6 1.4 H12.6 V5 M12.6 12.6 V16.8 H1.6 Z" stroke="#f0f0f0" fill="none" stroke-width="1.4"/><path d="M9.6 4.4 H4.4 V13.8 H9.6" stroke="#f0f0f0" fill="none" stroke-width="1.1"/><path d="M5.6 7.2 H11 V4.4 L16.4 9 L11 13.6 V10.8 H5.6 Z" fill="#1f66c0" stroke="#f0f0f0" stroke-width="0.9" stroke-linejoin="round"/></svg>
<div class="sep" style="left:1092px;top:121px;height:21px"></div>
<svg class="a" style="left:1099px;top:123px" width="17" height="17" viewBox="0 0 17 17"><circle cx="6.5" cy="6.5" r="4.8" fill="#2d2d30" stroke="#d8d8d8" stroke-width="1.3"/><path d="M4 6.5 H9 M6.5 4 V9" stroke="#3b8eea" stroke-width="1.4"/><path d="M10 10 L15 15" stroke="#d8d8d8" stroke-width="2.6"/></svg>
<svg class="a" style="left:1125px;top:124px" width="17" height="17" viewBox="0 0 17 17"><circle cx="6.5" cy="6.5" r="4.8" fill="#2d2d30" stroke="#d8d8d8" stroke-width="1.3"/><path d="M4 6.5 H9" stroke="#3b8eea" stroke-width="1.4"/><path d="M10 10 L15 15" stroke="#d8d8d8" stroke-width="2.6"/></svg>
<svg class="a" style="left:1150px;top:123px" width="17" height="17" viewBox="0 0 17 17"><path d="M1 3 C2 0.5 6.5 0.8 6.2 3.5 C6 5.5 3.5 5.5 3.8 7.5" stroke="#d8d8d8" stroke-width="1.5" fill="none"/><path d="M2.5 10 H5 V16 H2.5 Z M6.5 7 H9 V16 H6.5 Z M10.5 10 H13 V16 H10.5 Z M14 12 H15.5 V16 H14 Z" stroke="#d8d8d8" fill="none" stroke-width="1"/></svg>
<!-- session header -->
<div class="t" style="left:1032.2px;top:149px;font-weight:bold;font-size:12px;letter-spacing:-0.534px">Diagnostics session: 48 seconds</div>
<!-- ruler -->
<div class="a" style="left:1022px;top:167px;width:305px;height:1px;background:#4a4a4d"></div>
<div class="a" style="left:1022px;top:190px;width:305px;height:1px;background:#4a4a4d"></div>
<div class="a" style="left:1054px;top:168px;width:5px;height:22px;background:#f1f1f1"></div>
<div class="a" style="left:1290px;top:168px;width:5px;height:22px;background:#f1f1f1"></div>
<div class="a" style="left:1179px;top:168px;width:1px;height:22px;background:#555"></div>
<div class="t" style="left:1181.3px;top:168px;letter-spacing:-0.453px">40s</div>
<div class="a" style="left:1078px;top:186px;width:1px;height:4px;background:#555"></div><div class="a" style="left:1104px;top:186px;width:1px;height:4px;background:#555"></div><div class="a" style="left:1129px;top:186px;width:1px;height:4px;background:#555"></div><div class="a" style="left:1154px;top:186px;width:1px;height:4px;background:#555"></div><div class="a" style="left:1205px;top:186px;width:1px;height:4px;background:#555"></div><div class="a" style="left:1230px;top:186px;width:1px;height:4px;background:#555"></div><div class="a" style="left:1256px;top:186px;width:1px;height:4px;background:#555"></div><div class="a" style="left:1281px;top:186px;width:1px;height:4px;background:#555"></div>
<!-- Events -->
<svg class="a" style="left:1027px;top:197px" width="10" height="10" viewBox="0 0 10 10"><path d="M9 0.5 V9 H0.5 Z" fill="#252526" stroke="#c8c8c8" stroke-width="1"/><path d="M8.5 2.5 V8.5 H2.5 Z" fill="#9a9a9a"/></svg>
<div class="t" style="left:1039px;top:194px;font-weight:bold;letter-spacing:-0.777px">Events</div>
<div class="a" style="left:1040px;top:216px;width:10px;height:11px;border:1px solid #f1f1f1"></div>
<div class="a" style="left:1044px;top:216px;width:2px;height:11px;background:#f1f1f1"></div>
<div class="a" style="left:1058px;top:211px;width:233px;height:23px;border:1px solid #4a4a4d;background:#252526"></div>
<div class="a" style="left:1179px;top:212px;width:1px;height:21px;background:#3a3a3d"></div>
<!-- Process Memory -->
<svg class="a" style="left:1027px;top:240px" width="10" height="10" viewBox="0 0 10 10"><path d="M9 0.5 V9 H0.5 Z" fill="#252526" stroke="#c8c8c8" stroke-width="1"/><path d="M8.5 2.5 V8.5 H2.5 Z" fill="#9a9a9a"/></svg>
<div class="t" style="left:1039px;top:237px;font-weight:bold;letter-spacing:-0.345px">Process Memory (MB)</div>
<svg class="a" style="left:1230px;top:238px" width="10" height="13" viewBox="0 0 10 13"><path d="M1.5 1 H8.5 L7 10 C6.5 12.5 3.5 12.5 3 10 Z" fill="#f0b840"/></svg>
<svg class="a" style="left:1253px;top:238px" width="13" height="11" viewBox="0 0 13 11"><path d="M0.5 0.5 H12.5 L6.5 10.5 Z" fill="#3b9ae8"/></svg>
<div class="a" style="left:1277px;top:238px;width:12px;height:12px;border-radius:6px;background:#6fa8c8"></div>
<div class="t" style="left:1034px;top:255px">179</div>
<div class="t" style="left:1046px;top:309px">0</div>
<div class="t" style="left:1296px;top:255px">179</div>
<div class="t" style="left:1296px;top:309px">0</div>
<svg class="a" style="left:1058px;top:254px" width="233" height="70" viewBox="0 0 233 70"><rect x="0.5" y="0.5" width="232" height="69" fill="#252526" stroke="#4a4a4d"/><path d="M1 69 V6.5 H5 L8 9 H40 L42 9.6 H112 L116 11 H225.5 V69 Z" fill="#5a7f92"/><path d="M1 6.5 H5 L8 9 H40 L42 9.6 H112 L116 11 H225.5" stroke="#7aa8c0" fill="none" stroke-width="1"/><path d="M121.5 1 V69" stroke="#6a8e9f" stroke-width="1" opacity="0.5"/></svg>
<!-- CPU -->
<svg class="a" style="left:1027px;top:330px" width="10" height="10" viewBox="0 0 10 10"><path d="M9 0.5 V9 H0.5 Z" fill="#252526" stroke="#c8c8c8" stroke-width="1"/><path d="M8.5 2.5 V8.5 H2.5 Z" fill="#9a9a9a"/></svg>
<div class="t" style="left:1038.9px;top:327px;font-weight:bold;letter-spacing:-0.436px">CPU (% of all processors)</div>
<div class="t" style="left:1034px;top:345px">100</div>
<div class="t" style="left:1046px;top:399px">0</div>
<div class="t" style="left:1296px;top:345px">100</div>
<div class="t" style="left:1296px;top:399px">0</div>
<svg class="a" style="left:1058px;top:344px" width="233" height="70" viewBox="0 0 233 70"><rect x="0.5" y="0.5" width="232" height="69" fill="#252526" stroke="#4a4a4d"/><path d="M121.5 1 V69" stroke="#3a3a3d" stroke-width="1"/><path d="M1 69 H9 L13 66.5 L17 69 H29 L33 66 L37 68.5 L42 65.5 L47 69 H226 " fill="#5a7f92" stroke="#6fa0b8" stroke-width="1"/></svg>
<!-- lower section -->
<div class="a" style="left:1022px;top:433px;width:305px;height:2px;background:#3f3f46"></div>
<div class="a" style="left:1026px;top:440px;width:63px;height:19px;background:#3f3f46"></div>
<div class="a" style="left:1022px;top:459px;width:305px;height:2px;background:#3f3f46"></div>
<div class="t" style="left:1032px;top:442px;letter-spacing:-0.149px">Summary</div>
<div class="t" style="left:1095px;top:442px;letter-spacing:-0.465px">Events</div>
<div class="t" style="left:1141.3px;top:442px;letter-spacing:-0.155px">Memory Usage</div>
<div class="t" style="left:1233.3px;top:442px;letter-spacing:-0.618px">CPU Usage</div>
<div class="t" style="left:1031.3px;top:465px;font-weight:bold;letter-spacing:-0.710px">Events</div>
<div class="a" style="left:1022px;top:483px;width:305px;height:1px;background:#3f3f46"></div>
<svg class="a" style="left:1037px;top:494px" width="14" height="9" viewBox="0 0 14 9"><path d="M3 1 L5.5 4.5 L3 8 L0.5 4.5 Z M7 1 L9.5 4.5 L7 8 L4.5 4.5 Z M11 1 L13.5 4.5 L11 8 L8.5 4.5 Z" fill="none" stroke="#d0d0d0" stroke-width="1.1"/></svg>
<div class="t" style="left:1058.5px;top:491px;letter-spacing:-0.225px">Show Events (0 of 0)</div>
<div class="a" style="left:1022px;top:512px;width:305px;height:1px;background:#3f3f46"></div>
<div class="t" style="left:1031.3px;top:517px;font-weight:bold;letter-spacing:-0.256px">Memory Usage</div>
<div class="a" style="left:1022px;top:535px;width:305px;height:1px;background:#3f3f46"></div>
<svg class="a" style="left:1037px;top:545px" width="14" height="11" viewBox="0 0 14 11"><path d="M0.5 1.5 H13 V10.5 H0.5 Z M2 0.5 H5" stroke="#c8c8c8" fill="none"/><rect x="5" y="4" width="4.5" height="4.5" rx="1.5" fill="none" stroke="#c8c8c8"/></svg>
<div class="t" style="left:1058.5px;top:543px;letter-spacing:-0.176px">Take Snapshot</div>
<div class="a" style="left:1022px;top:564px;width:305px;height:1px;background:#3f3f46"></div>
<div class="t" style="left:1031.3px;top:569px;font-weight:bold;letter-spacing:-0.587px">CPU Usage</div>
<div class="a" style="left:1022px;top:587px;width:305px;height:1px;background:#3f3f46"></div>
<div class="a" style="left:1039px;top:597px;width:10px;height:10px;border-radius:5px;border:1px solid #c8c8c8;background:#3a3a3c"></div>
<div class="t" style="left:1058.5px;top:595px;letter-spacing:-0.278px">Record CPU Profile</div>
</div>

<!-- ===== RIGHT VERTICAL TABS ===== -->
<div id="rtabs">
<div class="a" style="left:1353px;top:97px;width:6px;height:88px;background:#3f3f46"></div>
<div class="a" style="left:1353px;top:195px;width:6px;height:77px;background:#3f3f46"></div>
<div class="a" style="left:1353px;top:281px;width:6px;height:116px;background:#3f3f46"></div>
<div class="t" style="left:1350px;top:97.5px;transform-origin:0 0;transform:rotate(90deg);color:#d0d0d0;letter-spacing:-0.217px">Solution Explorer</div>
<div class="t" style="left:1350px;top:198.4px;transform-origin:0 0;transform:rotate(90deg);color:#d0d0d0;letter-spacing:-0.390px">Team Explorer</div>
<div class="t" style="left:1350px;top:284.8px;transform-origin:0 0;transform:rotate(90deg);color:#d0d0d0;letter-spacing:-0.287px">Live Property Explorer</div>
</div>

<!-- ===== BOTTOM PANELS ===== -->
<div id="bottom">
<!-- Autos -->
<div class="a" style="left:31px;top:726px;width:642px;height:191px;background:#252526;border:1px solid #3f3f46"></div>
<div class="a" style="left:32px;top:727px;width:640px;height:21px;background:#2d2d30"></div>
<div class="t" style="left:37px;top:729px;color:#d0d0d0;letter-spacing:-0.037px">Autos</div>
<div class="dots" style="left:75px;top:734px;width:590px"></div>
<div class="a" style="left:32px;top:748px;width:640px;height:24px;background:#2d2d30"></div>
<div class="a" style="left:32px;top:749px;width:225px;height:21px;background:#333337;border:1px solid #3f3f46"></div>
<div class="a" style="left:245px;top:750px;width:11px;height:19px;background:#3f3f46"></div>
<div class="t" style="left:37px;top:752px;color:#c0c0c0;letter-spacing:-0.302px">Search (Ctrl+E)</div>
<svg class="a" style="left:228px;top:752px" width="15" height="15" viewBox="0 0 15 15"><circle cx="9.5" cy="5.5" r="3.4" fill="none" stroke="#f1f1f1" stroke-width="1.9"/><path d="M7 8 L2 13" stroke="#f1f1f1" stroke-width="2.4"/></svg>
<div class="arr" style="left:247px;top:758px;border-top-color:#f1f1f1"></div>
<svg class="a" style="left:266px;top:755px" width="12" height="10" viewBox="0 0 12 10"><path d="M11 5 H2 M5.5 1.5 L2 5 L5.5 8.5" stroke="#55555a" stroke-width="1.7" fill="none"/></svg>
<svg class="a" style="left:287px;top:755px" width="12" height="10" viewBox="0 0 12 10"><path d="M1 5 H10 M6.5 1.5 L10 5 L6.5 8.5" stroke="#55555a" stroke-width="1.7" fill="none"/></svg>
<div class="t dim" style="left:308px;top:753px;letter-spacing:-0.286px">Search Depth:</div>
<div class="a" style="left:387px;top:750px;width:40px;height:20px;border:1px solid #434346"></div>
<div class="arr" style="left:416px;top:759px;border-top-color:#47474a"></div>
<div class="a" style="left:40px;top:773px;width:1px;height:19px;background:#333337"></div>
<div class="a" style="left:245px;top:773px;width:1px;height:19px;background:#333337"></div>
<div class="a" style="left:552px;top:773px;width:1px;height:19px;background:#333337"></div>
<div class="a" style="left:32px;top:792px;width:623px;height:1px;background:#2d2d30"></div>
<div class="t" style="left:46px;top:775px;color:#8a8a8c;letter-spacing:-0.004px">Name</div>
<div class="t" style="left:251px;top:775px;color:#8a8a8c;letter-spacing:-0.163px">Value</div>
<div class="t" style="left:558px;top:775px;color:#8a8a8c;letter-spacing:-0.129px">Type</div>
<div class="a" style="left:655px;top:773px;width:17px;height:123px;background:#3e3e42"></div>
<div class="arr" style="left:659px;top:779px;border-left-width:4px;border-right-width:4px;border-top:0;border-bottom:4px solid #55555a"></div>
<div class="arr" style="left:659px;top:885px;border-left-width:4px;border-right-width:4px;border-top:4px solid #55555a"></div>
<div class="a" style="left:32px;top:896px;width:640px;height:21px;background:#2d2d30;border-top:1px solid #3f3f46"></div>
<div class="a" style="left:32px;top:896px;width:42px;height:21px;background:#252526;border-right:1px solid #3f3f46"></div>
<div class="t" style="left:37px;top:898px;color:#0097fb;letter-spacing:-0.037px">Autos</div>
<div class="t" style="left:80px;top:898px;letter-spacing:-0.281px">Locals</div>
<div class="t" style="left:125px;top:898px;letter-spacing:-0.154px">Watch 1</div>
<!-- Call Stack -->
<div class="a" style="left:679px;top:726px;width:649px;height:191px;background:#252526;border:1px solid #3f3f46"></div>
<div class="a" style="left:680px;top:727px;width:647px;height:20px;background:#2d2d30"></div>
<div class="dots" style="left:991px;top:734px;width:280px"></div>
<div class="arr" style="left:1278px;top:735px;border-left-width:4px;border-right-width:4px;border-top-width:4px;border-top-color:#f1f1f1"></div>
<svg class="a" style="left:1294px;top:730px" width="9" height="12" viewBox="0 0 9 12"><path d="M2.5 1 H6.5 V6.5 H2.5 Z M1 6.5 H8 M4.5 6.5 V11.5" stroke="#f1f1f1" fill="none" stroke-width="1.1"/><rect x="5" y="1" width="1.5" height="5.5" fill="#f1f1f1"/></svg>
<svg class="a" style="left:1310px;top:731px" width="10" height="10" viewBox="0 0 10 10"><path d="M1 1 L9 9 M9 1 L1 9" stroke="#f1f1f1" stroke-width="1.4"/></svg>
<div class="a" style="left:696px;top:747px;width:1px;height:19px;background:#333337"></div>
<div class="a" style="left:1280px;top:747px;width:1px;height:19px;background:#333337"></div>
<div class="a" style="left:680px;top:766px;width:630px;height:1px;background:#2d2d30"></div>
<div class="t" style="left:702.5px;top:749px;color:#8a8a8c;letter-spacing:-0.129px">Name</div>
<div class="t" style="left:1285px;top:749px;color:#8a8a8c">Lang</div>
<div class="a" style="left:1310px;top:747px;width:17px;height:149px;background:#3e3e42"></div>
<div class="arr" style="left:1314px;top:754px;border-left-width:4px;border-right-width:4px;border-top:0;border-bottom:4px solid #55555a"></div>
<div class="arr" style="left:1314px;top:885px;border-left-width:4px;border-right-width:4px;border-top:4px solid #55555a"></div>
<div class="a" style="left:680px;top:896px;width:647px;height:21px;background:#2d2d30;border-top:1px solid #3f3f46"></div>
<div class="a" style="left:680px;top:896px;width:62px;height:21px;background:#252526;border-right:1px solid #3f3f46"></div>
<div class="t" style="left:685px;top:898px;color:#0097fb;letter-spacing:-0.353px">Call Stack</div>
<div class="t" style="left:748px;top:898px;letter-spacing:-0.125px">Breakpoints</div>
<div class="t" style="left:822px;top:898px;letter-spacing:-0.189px">Exception Settings</div>
<div class="t" style="left:930.5px;top:898px;letter-spacing:0.152px">Command Window</div>
<div class="t" style="left:1046.5px;top:898px;letter-spacing:0.091px">Immediate Window</div>
<div class="t" style="left:1162.5px;top:898px;letter-spacing:0.245px">Output</div>
</div>

<!-- ===== STATUS BAR ===== -->
<div id="status">
<div class="a" style="left:0;top:923px;width:1359px;height:23px;background:#ca5100"></div>
<svg class="a" style="left:4px;top:929px" width="17" height="12" viewBox="0 0 17 12"><path d="M4 1 H16 L13 11 H1 Z" stroke="#fff" fill="none" stroke-width="1.3"/></svg>
<div class="t" style="left:28px;top:927px;color:#fff;letter-spacing:-0.637px">Ready</div>
<div class="t" style="left:542.5px;top:927px;color:#fff;letter-spacing:-0.406px">Ln 40</div>
<div class="t" style="left:635px;top:927px;color:#fff;letter-spacing:-0.365px">Col 57</div>
<div class="t" style="left:727.5px;top:927px;color:#fff;letter-spacing:-0.406px">Ch 57</div>
<div class="t" style="left:863px;top:927px;color:#fff;letter-spacing:-0.505px">INS</div>
<svg class="a" style="left:1130px;top:929px" width="11" height="13" viewBox="0 0 11 13"><path d="M5.5 12.5 V2 M1.5 6 L5.5 1.5 L9.5 6" stroke="#fff" stroke-width="1.8" fill="none"/></svg>
<div class="t" style="left:1150px;top:927px;color:#fff;letter-spacing:0.020px">Add to Source Control</div>
<div class="arr" style="left:1274px;top:933px;border-left-width:4px;border-right-width:4px;border-top:0;border-bottom:4px solid #fff"></div>
<svg class="a" style="left:1300px;top:925px" width="26" height="20" viewBox="0 0 26 20"><path d="M2.6 12.6 C5 10.8 3.8 5 7.2 3.2 C10.6 1.4 13.6 3.6 13.4 7 C13.3 10.4 14 11.8 15.6 12.6 Z" fill="#cfcfcf"/><path d="M6.6 13 C6.6 16 10.4 16 10.4 13 Z" fill="#cfcfcf"/><circle cx="16.6" cy="13" r="5.6" fill="#fff"/></svg>
<div class="t" style="left:1313.6px;top:930px;font-size:10.5px;color:#111">2</div>
<svg class="a" style="left:1345px;top:932px" width="12" height="12" viewBox="0 0 12 12"><path d="M9 2h1v1h-1z M7 4h1v1h-1z M9 4h1v1h-1z M5 6h1v1h-1z M7 6h1v1h-1z M9 6h1v1h-1z M3 8h1v1h-1z M5 8h1v1h-1z M7 8h1v1h-1z M9 8h1v1h-1z" fill="#e8a070"/></svg>
</div>
</div>

</body></html>
